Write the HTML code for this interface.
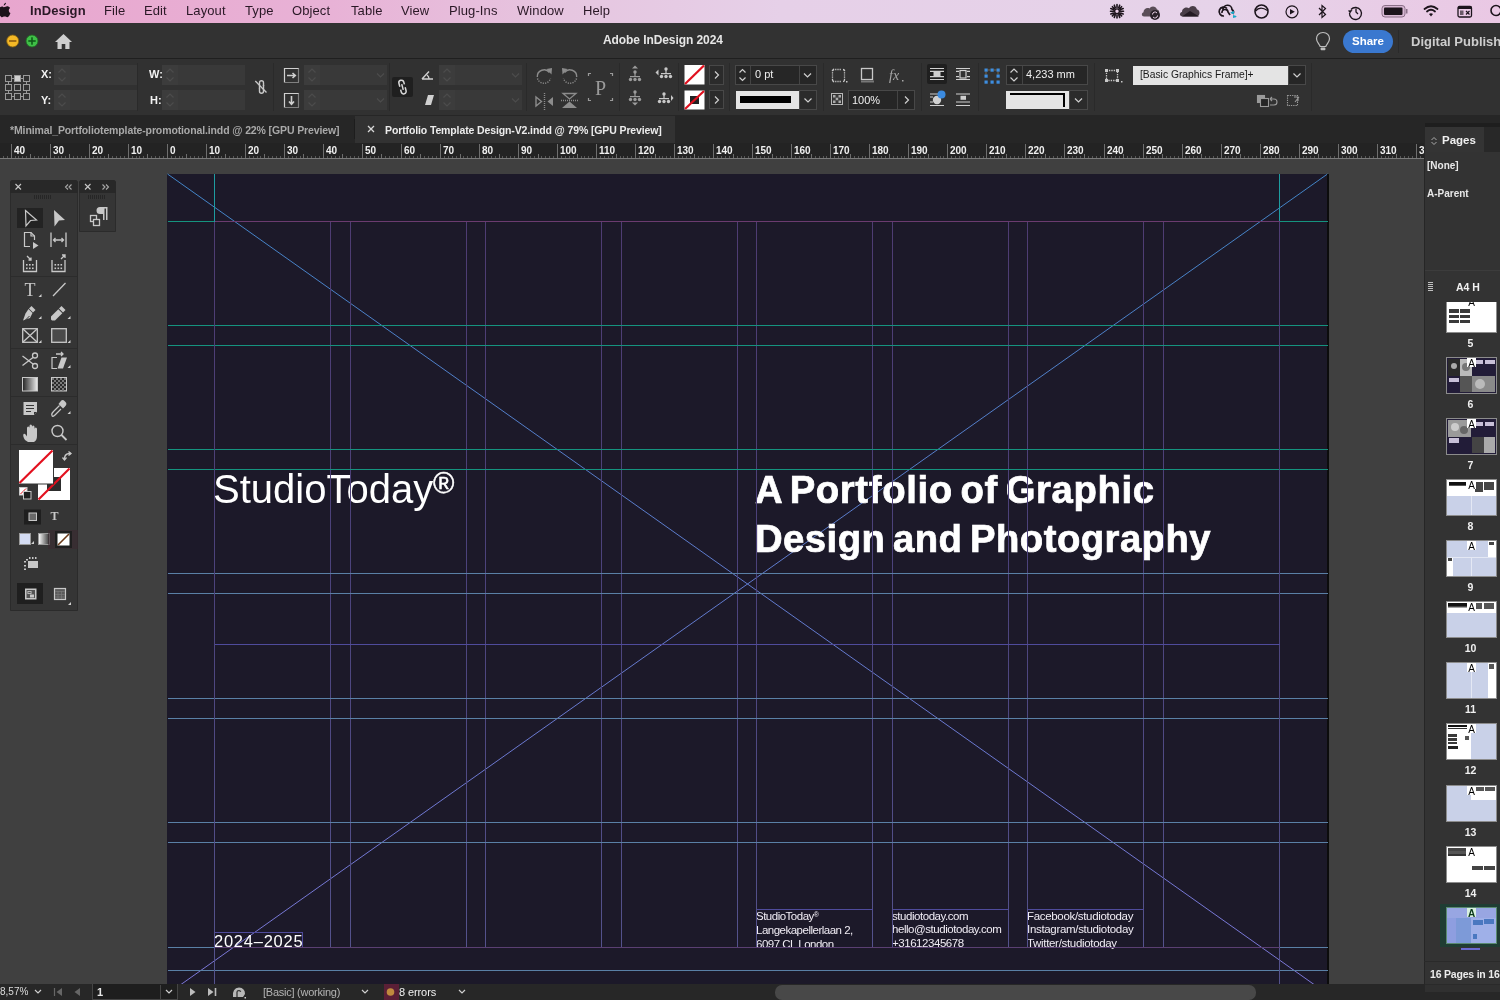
<!DOCTYPE html>
<html><head><meta charset="utf-8">
<style>
*{margin:0;padding:0;box-sizing:border-box}
html,body{width:1500px;height:1000px;overflow:hidden;background:#404040;font-family:"Liberation Sans",sans-serif}
.a{position:absolute}
#menubar{left:0;top:0;width:1500px;height:23px;background:linear-gradient(90deg,#e8a6ce 0%,#e8b2d6 22%,#e6c6e0 38%,#e6d0e8 52%,#e6d3e9 82%,#eac8e4 100%)}
#menubar span{position:absolute;top:3px;font-size:13px;color:#2a1826;letter-spacing:0.1px}
#appbar{left:0;top:23px;width:1500px;height:36px;background:#323232;border-bottom:1px solid #1f1f1f}
#ctrl{left:0;top:59px;width:1500px;height:56px;background:#313131}
#tabbar{left:0;top:115px;width:1500px;height:28px;background:#262626}
#ruler{left:0;top:143px;width:1424px;height:16px;background:#232323}
#paste{left:0;top:159px;width:1424px;height:825px;background:#404040}
#page{left:167px;top:174px;width:1161px;height:810px;background:#1c1929}
#status{left:0;top:984px;width:1500px;height:16px;background:#272727}
#pages{left:1424px;top:123px;width:76px;height:861px;background:#333}

.fld{position:absolute;background:#393939;height:20px}
.spn{position:absolute;background:#3c3c3c;height:20px;width:16px}
.lbl{position:absolute;font-size:11px;font-weight:bold;color:#f2f2f2}
.sep{position:absolute;width:1px;background:#2a2a2a;top:4px;height:48px}
.box{position:absolute;border:1px solid #484848;background:#2b2b2b}
.ui{position:absolute;white-space:nowrap;font-size:11px}
</style></head><body style="will-change:transform">
<div id="menubar" class="a">
<svg class="a" style="left:0;top:0" width="1500" height="23">
<path d="M5.2 6.2 C6.5 6.2 7.5 5.4 8.2 5.4 C9.3 5.4 10.4 6 11 7 C9.3 8 9.5 10.6 11.3 11.5 C10.8 13 9.8 15.2 8.5 15.2 C7.6 15.2 7.3 14.6 6.2 14.6 C5 14.6 4.6 15.2 3.8 15.2 C2.4 15.2 0.6 12.3 0.6 9.6 C0.6 7 2.3 5.6 3.9 5.6 C4.6 5.6 4.9 6.2 5.2 6.2 Z M7.3 2.2 C7.4 3.4 6.5 4.8 5.3 4.8 C5.2 3.6 6.1 2.4 7.3 2.2 Z" fill="#1c121a" transform="translate(-2.2 0.2) scale(1.12)"/>
<g fill="#1c141c" stroke="#1c141c">
<g stroke-width="1.6" stroke-linecap="round"><path d="M1117 4.5 V7.5 M1117 15 V18 M1110.5 11.3 H1113.5 M1120.5 11.3 H1123.5 M1112.4 6.7 L1114.5 8.8 M1119.5 13.8 L1121.6 15.9 M1112.4 15.9 L1114.5 13.8 M1119.5 8.8 L1121.6 6.7 M1114.3 5.2 L1115.3 7.8 M1118.7 14.8 L1119.7 17.4 M1110.8 8.6 L1113.4 9.6 M1120.6 13 L1123.2 14 M1110.8 14 L1113.4 13 M1120.6 9.6 L1123.2 8.6 M1114.3 17.4 L1115.3 14.8 M1118.7 7.8 L1119.7 5.2"/></g>
<circle cx="1117" cy="11.3" r="2.4" fill="#e9cde8" stroke-width="1.4"/>
</g>
<path d="M1144 16.5 C1141.5 16.5 1141 13 1143.5 12.3 C1143.5 9 1147 7 1149.5 8.5 C1151 5.5 1156 5.8 1157 9.5 C1159.5 9.8 1160 13 1158 14 L1156 16.5 Z" fill="#5a4e58"/>
<circle cx="1155" cy="15" r="5" fill="#2a222a"/><path d="M1152.5 14.5 A2.5 2.5 0 0 1 1157 13 M1157.5 15.5 A2.5 2.5 0 0 1 1153 17" fill="none" stroke="#e9d0e6" stroke-width="1"/>
<path d="M1182.5 16.5 C1179.5 16.5 1179 12.5 1182 12 C1182 8.5 1186 6.5 1189 8.2 C1191 5 1196 5.5 1197 9.5 C1200 9.8 1200.5 15 1197.5 16.5 Z" fill="#4a3e48"/>
<path d="M1182 16.5 L1190 11 L1199 16.5 Z" fill="#231a22"/>
<g fill="none" stroke="#1c141c" stroke-width="1.7"><path d="M1224 16 A4.5 4.5 0 1 1 1227 8.5 M1223 10 A4.5 4.5 0 0 1 1232 9.5 A3.5 3.5 0 0 1 1233 14"/><path d="M1222 13 A3 3 0 0 1 1228 12 L1230 15"/></g>
<path d="M1230 12.5 L1234 11 L1234 14 Z M1233 15 L1237 16.5 L1233 18 Z" fill="#1aa8c8"/><rect x="1231" y="12" width="3" height="1.5" fill="#1aa8c8"/><rect x="1233" y="15.8" width="3" height="1.5" fill="#1aa8c8"/>
<circle cx="1261.5" cy="11.5" r="6.5" fill="none" stroke="#1c141c" stroke-width="1.6"/><path d="M1255.5 11 Q1260 5.5 1267.5 10.5" fill="none" stroke="#1c141c" stroke-width="1.4"/>
<circle cx="1292" cy="11.8" r="6" fill="none" stroke="#1c141c" stroke-width="1.2"/><path d="M1290 9 L1294.8 11.8 L1290 14.6 Z" fill="#1c141c"/>
<path d="M1319 8 L1325.5 14.5 L1322 17.5 V5.5 L1325.5 8.5 L1319 15" fill="none" stroke="#1c141c" stroke-width="1.2"/>
<g fill="none" stroke="#1c141c" stroke-width="1.3"><path d="M1351 9.5 A6 6 0 1 1 1349.5 13"/><path d="M1356 8.5 V12 L1358 14"/></g><path d="M1348 10.5 L1352.5 10 L1350 13.5 Z" fill="#1c141c"/>
<rect x="1382" y="5.5" width="23" height="11.5" rx="3" fill="#d8b8d4" stroke="#8a7088" stroke-width="1"/><rect x="1384" y="7.5" width="18.5" height="7.5" rx="1" fill="#1c141c"/><rect x="1406" y="9" width="1.5" height="4.5" fill="#8a7088"/>
<g fill="none" stroke="#1c141c" stroke-width="1.8" stroke-linecap="round"><path d="M1424.5 9 Q1431 3.5 1437.5 9"/><path d="M1427 11.5 Q1431 8 1435 11.5"/></g><path d="M1429 14 Q1431 12.5 1433 14 L1431 16.5 Z" fill="#1c141c"/>
<rect x="1458" y="6.5" width="13.5" height="10.5" rx="1.5" fill="none" stroke="#1c141c" stroke-width="1.3"/><rect x="1458" y="6.5" width="13.5" height="2.5" fill="#1c141c"/><rect x="1460" y="10.5" width="3.5" height="4.5" fill="#6a5a68"/><path d="M1466 11 L1469.5 14.5 M1469.5 11 L1466 14.5" stroke="#1c141c" stroke-width="1.2"/>
<circle cx="1496" cy="10.5" r="5" fill="none" stroke="#1c141c" stroke-width="1.6"/>
</svg>
<span style="left:30px;font-weight:bold">InDesign</span>
<span style="left:104px">File</span>
<span style="left:144px">Edit</span>
<span style="left:186px">Layout</span>
<span style="left:245px">Type</span>
<span style="left:292px">Object</span>
<span style="left:351px">Table</span>
<span style="left:401px">View</span>
<span style="left:449px">Plug-Ins</span>
<span style="left:517px">Window</span>
<span style="left:583px">Help</span>
</div>
<div id="appbar" class="a">
<svg class="a" style="left:0;top:0" width="80" height="35">
<circle cx="12.7" cy="18" r="6" fill="#f4b826" stroke="#8a6410" stroke-width="0.8"/>
<rect x="9" y="17.2" width="7.4" height="1.6" fill="#8a5a10"/>
<circle cx="32" cy="18" r="6" fill="#3fbf47" stroke="#1f6a22" stroke-width="0.8"/>
<rect x="28.3" y="17.2" width="7.4" height="1.6" fill="#0f5a18"/><rect x="31.2" y="14.3" width="1.6" height="7.4" fill="#0f5a18"/>
<path d="M55 19 L63.5 11 L72 19 L69.5 19 L69.5 26 L65.3 26 L65.3 21 L61.7 21 L61.7 26 L57.5 26 L57.5 19 Z" fill="#cfcfcf"/>
</svg>
<div class="a" style="left:603px;top:10px;font-size:12px;font-weight:bold;color:#e6e6e6;letter-spacing:-0.08px;white-space:nowrap">Adobe InDesign 2024</div>
<svg class="a" style="left:1310px;top:6px" width="26" height="26">
<path d="M13 3.5 C8.8 3.5 6.5 6.6 6.5 9.8 C6.5 13 9.2 14.8 10.2 17.5 L15.8 17.5 C16.8 14.8 19.5 13 19.5 9.8 C19.5 6.6 17.2 3.5 13 3.5 Z" fill="none" stroke="#bdbdbd" stroke-width="1.2"/>
<rect x="10.6" y="18.6" width="4.8" height="2.6" rx="0.8" fill="#bdbdbd"/>
</svg>
<div class="a" style="left:1343px;top:7px;width:50px;height:23px;border-radius:12px;background:#3a78cf"></div>
<div class="a" style="left:1352px;top:12px;font-size:11.5px;font-weight:bold;color:#fff;white-space:nowrap">Share</div>
<div class="a" style="left:1398px;top:7px;width:1px;height:23px;background:#2a2a2a"></div>
<div class="a" style="left:1411px;top:11px;font-size:13px;font-weight:bold;color:#cdcdcd;white-space:nowrap">Digital Publishing</div>
</div>
<div id="ctrl" class="a">
<svg class="a" style="left:0;top:0" width="40" height="56">
<g fill="none" stroke="#9a9a9a" stroke-width="1">
<rect x="5.5" y="16.5" width="6" height="6"/><rect x="14.5" y="16.5" width="6" height="6" fill="#cfcfcf"/><rect x="23.5" y="16.5" width="6" height="6"/>
<rect x="5.5" y="25.5" width="6" height="6"/><rect x="14.5" y="25.5" width="6" height="6"/><rect x="23.5" y="25.5" width="6" height="6"/>
<rect x="5.5" y="34.5" width="6" height="6"/><rect x="14.5" y="34.5" width="6" height="6"/><rect x="23.5" y="34.5" width="6" height="6"/>
<path d="M11.5 19.5h3M20.5 19.5h3M11.5 37.5h3M20.5 37.5h3M8.5 22.5v3M8.5 31.5v3M26.5 22.5v3M26.5 31.5v3"/>
</g></svg>
<div class="lbl" style="left:41px;top:9px">X:</div>
<div class="lbl" style="left:41px;top:35px">Y:</div>
<div class="fld" style="left:54px;top:6px;width:83px"></div><div class="spn" style="left:54px;top:6px"><svg width="16" height="20" style="position:absolute;left:0;top:0"><path d="M4.5 7.5 L8 4 L11.5 7.5 M4.5 12.5 L8 16 L11.5 12.5" fill="none" stroke="#4c4c4c" stroke-width="1.2"/></svg></div>
<div class="fld" style="left:54px;top:31px;width:83px"></div><div class="spn" style="left:54px;top:31px"><svg width="16" height="20" style="position:absolute;left:0;top:0"><path d="M4.5 7.5 L8 4 L11.5 7.5 M4.5 12.5 L8 16 L11.5 12.5" fill="none" stroke="#4c4c4c" stroke-width="1.2"/></svg></div>
<div class="sep" style="left:137px"></div>
<div class="lbl" style="left:149px;top:9px">W:</div>
<div class="lbl" style="left:150px;top:35px">H:</div>
<div class="fld" style="left:162px;top:6px;width:83px"></div><div class="spn" style="left:162px;top:6px"><svg width="16" height="20" style="position:absolute;left:0;top:0"><path d="M4.5 7.5 L8 4 L11.5 7.5 M4.5 12.5 L8 16 L11.5 12.5" fill="none" stroke="#4c4c4c" stroke-width="1.2"/></svg></div>
<div class="fld" style="left:162px;top:31px;width:83px"></div><div class="spn" style="left:162px;top:31px"><svg width="16" height="20" style="position:absolute;left:0;top:0"><path d="M4.5 7.5 L8 4 L11.5 7.5 M4.5 12.5 L8 16 L11.5 12.5" fill="none" stroke="#4c4c4c" stroke-width="1.2"/></svg></div>
<svg class="a" style="left:250px;top:16px" width="22" height="22"><g fill="none" stroke="#c8c8c8" stroke-width="1.4">
<path d="M9.5 13.5 V7.8 a2 2 0 0 1 4 0 V11"/><path d="M13.5 10 V16.2 a2 2 0 0 1 -4 0 V13"/></g>
<path d="M5.3 6 L16.5 17.5" stroke="#c8c8c8" stroke-width="1.3"/></svg>
<div class="sep" style="left:273px"></div>
<svg class="a" style="left:283px;top:8px" width="18" height="44"><g fill="none" stroke="#d0d0d0" stroke-width="1.2">
<path d="M1.5 15.5 V1.5 H15.5"/><path d="M15.5 1.5 V15.5 H1.5" stroke-dasharray="1 1"/>
<path d="M4 8.5 H12 M9.5 6 L12.3 8.5 L9.5 11" stroke-width="1.6"/>
<path d="M1.5 40.5 V26.5 H15.5"/><path d="M15.5 26.5 V40.5 H1.5" stroke-dasharray="1 1"/>
<path d="M8.5 29 V37 M6 34.5 L8.5 37.3 L11 34.5" stroke-width="1.6"/></g></svg>
<div class="fld" style="left:304px;top:6px;width:83px"></div><div class="spn" style="left:304px;top:6px"><svg width="16" height="20" style="position:absolute;left:0;top:0"><path d="M4.5 7.5 L8 4 L11.5 7.5 M4.5 12.5 L8 16 L11.5 12.5" fill="none" stroke="#4c4c4c" stroke-width="1.2"/></svg></div>
<div class="fld" style="left:304px;top:31px;width:83px"></div><div class="spn" style="left:304px;top:31px"><svg width="16" height="20" style="position:absolute;left:0;top:0"><path d="M4.5 7.5 L8 4 L11.5 7.5 M4.5 12.5 L8 16 L11.5 12.5" fill="none" stroke="#4c4c4c" stroke-width="1.2"/></svg></div>
<div class="sep" style="left:389px"></div>
<div class="a" style="left:392px;top:18px;width:21px;height:20px;background:#1f1f1f;border-radius:2px"></div>
<svg class="a" style="left:392px;top:18px" width="21" height="20"><g fill="none" stroke="#d8d8d8" stroke-width="1.5" transform="rotate(-15 10.5 10)">
<path d="M8 9 V5.5 a2.5 2.5 0 0 1 5 0 V8"/><path d="M13 11 V14.5 a2.5 2.5 0 0 1 -5 0 V12"/><path d="M10.5 7 V13"/></g></svg>
<svg class="a" style="left:420px;top:10px" width="16" height="40"><g fill="none" stroke="#d0d0d0" stroke-width="1.4">
<path d="M2 10 H13 M2 10 L9 2.5"/><path d="M7 6 Q9 7.5 9 10"/></g>
<path d="M5 36 L8 26 H14 L11 36 Z" fill="#d0d0d0"/></svg>
<div class="fld" style="left:439px;top:6px;width:83px"></div><div class="spn" style="left:439px;top:6px"><svg width="16" height="20" style="position:absolute;left:0;top:0"><path d="M4.5 7.5 L8 4 L11.5 7.5 M4.5 12.5 L8 16 L11.5 12.5" fill="none" stroke="#4c4c4c" stroke-width="1.2"/></svg></div>
<div class="fld" style="left:439px;top:31px;width:83px"></div><div class="spn" style="left:439px;top:31px"><svg width="16" height="20" style="position:absolute;left:0;top:0"><path d="M4.5 7.5 L8 4 L11.5 7.5 M4.5 12.5 L8 16 L11.5 12.5" fill="none" stroke="#4c4c4c" stroke-width="1.2"/></svg></div>
<div class="sep" style="left:526px"></div>
<svg class="a" style="left:530px;top:4px" width="90" height="50">
<g fill="none" stroke="#8c8c8c" stroke-width="1.4">
<path d="M7.5 15.5 A6.8 6.8 0 0 0 20.5 15.5" stroke-dasharray="1.2 1.2"/><path d="M7.3 14 A6.8 6.8 0 0 1 19.5 9.5"/>
<path d="M46.5 15.5 A6.8 6.8 0 0 1 33.5 15.5" stroke-dasharray="1.2 1.2"/><path d="M46.7 14 A6.8 6.8 0 0 0 34.5 9.5"/>
<path d="M6 34 L11.5 38.5 L6 43 Z"/><path d="M14.5 30 V48" stroke-dasharray="1 1"/></g>
<g fill="#8c8c8c"><path d="M16.5 6 L22 5 L21.5 11.5 Z"/><path d="M37.5 6 L32 5 L32.5 11.5 Z"/>
<path d="M23 34 L17.5 38.5 L23 43 Z"/>
<path d="M32 45 L39.5 38.5 L47 45 Z"/></g>
<g fill="none" stroke="#8c8c8c" stroke-width="1.3"><path d="M33 30.5 H46 L39.5 36 Z"/><path d="M31 37.5 H48" stroke-dasharray="1 1"/></g>
<g fill="none" stroke="#9a9a9a" stroke-width="1.2"><path d="M58.5 13 V10.5 H61 M80 10.5 H82.5 V13 M58.5 35 V37.5 H61 M80 37.5 H82.5 V35"/></g>
<text x="70.5" y="32" font-family="Liberation Serif" font-size="20" fill="#9a9a9a" text-anchor="middle">P</text>
</svg>
<div class="sep" style="left:619px"></div>
<svg class="a" style="left:624px;top:4px" width="54" height="50"><g fill="#9c9c9c" transform="translate(3 0)">
<path d="M8 2.5 L11 5.5 H5 Z"/><circle cx="8" cy="9" r="1.7"/><rect x="7.4" y="9" width="1.2" height="5"/><rect x="3" y="13" width="10" height="1.2"/><circle cx="3.5" cy="16.5" r="1.7"/><circle cx="8" cy="16.5" r="1.7"/><circle cx="12.5" cy="16.5" r="1.7"/>
<g transform="translate(0 25)"><circle cx="8" cy="4" r="1.7"/><rect x="7.4" y="4" width="1.2" height="5"/><rect x="3" y="8" width="10" height="1.2"/><circle cx="3.5" cy="11.5" r="1.7"/><circle cx="8" cy="11.5" r="1.7"/><circle cx="12.5" cy="11.5" r="1.7"/><path d="M5 14.5 H11 L8 17.5 Z"/></g>
</g><g fill="#c8c8c8">
<g transform="translate(33 3)"><circle cx="9" cy="3" r="1.7"/><rect x="8.4" y="3" width="1.2" height="5"/><rect x="4" y="7" width="10" height="1.2"/><circle cx="4.5" cy="10.5" r="1.7"/><circle cx="9" cy="10.5" r="1.7"/><circle cx="13.5" cy="10.5" r="1.7"/><path d="M-1.5 6.5 L1.5 3.5 V9.5 Z"/></g>
<g transform="translate(31 28)"><circle cx="9" cy="3" r="1.7"/><rect x="8.4" y="3" width="1.2" height="5"/><rect x="4" y="7" width="10" height="1.2"/><circle cx="4.5" cy="10.5" r="1.7"/><circle cx="9" cy="10.5" r="1.7"/><circle cx="13.5" cy="10.5" r="1.7"/><path d="M17 7 L14.5 4 V10 Z" transform="translate(1.5 0)"/></g>
</g></svg>
<div class="sep" style="left:678px"></div>
<svg class="a" style="left:684px;top:6px" width="22" height="45">
<rect x="0.5" y="0" width="20" height="19.5" fill="#fff"/><path d="M1 19 L20 0.5" stroke="#e0101e" stroke-width="2.2"/>
<rect x="0.5" y="25.5" width="20" height="19" fill="#fff"/><rect x="6" y="31" width="9" height="8" fill="#222"/><path d="M1 44 L20 26" stroke="#e0101e" stroke-width="2.2"/>
</svg>
<div class="box" style="left:709px;top:6px;width:15px;height:20px"></div>
<div class="box" style="left:709px;top:31px;width:15px;height:19px"></div>
<svg class="a" style="left:709px;top:6px" width="15" height="45"><g fill="none" stroke="#cfcfcf" stroke-width="1.2"><path d="M6 6.5 L9.5 10 L6 13.5"/><path d="M6 31.5 L9.5 35 L6 38.5"/></g></svg>
<div class="sep" style="left:729px"></div>
<div class="box" style="left:735px;top:6px;width:82px;height:20px;background:#262626"></div>
<div class="a" style="left:750px;top:7px;width:1px;height:18px;background:#444"></div>
<div class="a" style="left:799px;top:7px;width:1px;height:18px;background:#444"></div>
<svg class="a" style="left:735px;top:6px" width="82" height="20"><g fill="none" stroke="#d0d0d0" stroke-width="1.2"><path d="M4.5 7.5 L7.5 4.5 L10.5 7.5 M4.5 12.5 L7.5 15.5 L10.5 12.5"/><path d="M69 8.5 L72.5 12 L76 8.5"/></g></svg>
<div class="ui" style="left:755px;top:9px;color:#efefef">0 pt</div>
<div class="a" style="left:736px;top:32px;width:63px;height:18px;background:#e4e4e4"></div>
<div class="a" style="left:740px;top:37px;width:51px;height:7px;background:#000"></div>
<div class="box" style="left:799px;top:31px;width:18px;height:20px;background:#2b2b2b"></div>
<svg class="a" style="left:799px;top:31px" width="18" height="20"><path d="M5.5 8.5 L9 12 L12.5 8.5" fill="none" stroke="#d0d0d0" stroke-width="1.2"/></svg>
<div class="sep" style="left:823px"></div>
<svg class="a" style="left:828px;top:6px" width="80" height="46"><g fill="none" stroke="#c8c8c8" stroke-width="1.3">
<path d="M5 4.5 H13 M5 16.5 H13 M4.5 5 V16 M16.5 5 V16" stroke-dasharray="1.2 1"/>
<path d="M6 4.5 Q4.5 4.5 4.5 6 M15 4.5 Q16.5 4.5 16.5 6 M4.5 15 Q4.5 16.5 6 16.5 M16.5 15 Q16.5 16.5 15 16.5"/>
<rect x="33.5" y="3.5" width="11" height="11"/>
</g><rect x="18" y="16" width="1.5" height="1.5" fill="#c8c8c8"/>
<rect x="33" y="15.5" width="13" height="2" fill="#777"/>
<text x="61" y="15" font-family="Liberation Serif" font-style="italic" font-size="14" fill="#a8a8a8">fx</text><rect x="74" y="15" width="1.5" height="1.5" fill="#a8a8a8"/>
<g transform="translate(3 28)"><rect x="0.5" y="0.5" width="11" height="11" fill="none" stroke="#b8b8b8"/><rect x="2" y="2" width="8" height="8" fill="#3a3a3a"/><rect x="2" y="2" width="2.5" height="2.5" fill="#aaa"/><rect x="7.5" y="2" width="2.5" height="2.5" fill="#aaa"/><rect x="4.7" y="4.7" width="2.5" height="2.5" fill="#aaa"/><rect x="2" y="7.5" width="2.5" height="2.5" fill="#aaa"/><rect x="7.5" y="7.5" width="2.5" height="2.5" fill="#aaa"/></g>
</svg>
<div class="box" style="left:848px;top:31px;width:67px;height:20px;background:#262626"></div>
<div class="a" style="left:897px;top:32px;width:1px;height:18px;background:#444"></div>
<div class="ui" style="left:852px;top:35px;color:#efefef">100%</div>
<svg class="a" style="left:898px;top:31px" width="17" height="20"><path d="M7 6.5 L10.5 10 L7 13.5" fill="none" stroke="#d0d0d0" stroke-width="1.2"/></svg>
<div class="sep" style="left:921px"></div>
<div class="a" style="left:927px;top:5px;width:20px;height:20px;background:#1f1f1f;border-radius:2px"></div>
<svg class="a" style="left:927px;top:5px" width="50" height="48"><g fill="none" stroke="#d0d0d0" stroke-width="1.2">
<path d="M3 4.5 H17 M3 15.5 H17 M3 7.3 H17 M3 12.7 H17"/><rect x="6.5" y="8" width="7" height="4" fill="#d0d0d0" stroke="none"/>
<path d="M29 4.5 H43 M29 15.5 H43 M29 7.3 H32 M40 7.3 H43 M29 12.7 H32 M40 12.7 H43"/><rect x="33" y="6.5" width="6" height="7.5"/>
<path d="M3 30 H17 M3 41.5 H17 M3 33 H6 M3 38 H6"/>
<path d="M29 30 H43 M29 41.5 H43 M29 38 H43"/><rect x="33.5" y="31.8" width="5.5" height="4" fill="#d0d0d0" stroke="none"/>
</g><circle cx="10" cy="36" r="4.2" fill="#d0d0d0"/><circle cx="14.5" cy="30.5" r="4" fill="#3b8be0"/></svg>
<div class="sep" style="left:978px"></div>
<svg class="a" style="left:984px;top:9px" width="18" height="16"><g fill="#3e8ee0"><rect x="0.5" y="0.5" width="3.2" height="3.2"/><rect x="6.5" y="0.5" width="3.2" height="3.2"/><rect x="12.5" y="0.5" width="3.2" height="3.2"/><rect x="0.5" y="6.5" width="3.2" height="3.2"/><rect x="12.5" y="6.5" width="3.2" height="3.2"/><rect x="0.5" y="12.5" width="3.2" height="3.2"/><rect x="6.5" y="12.5" width="3.2" height="3.2"/><rect x="12.5" y="12.5" width="3.2" height="3.2"/></g><path d="M3.7 2 H6.5 M9.7 2 H12.5 M2 3.7 V6.5 M14 3.7 V6.5" stroke="#8a7a5a" stroke-width="0.8"/></svg>
<div class="box" style="left:1006px;top:6px;width:82px;height:20px;background:#262626"></div>
<div class="a" style="left:1022px;top:7px;width:1px;height:18px;background:#444"></div>
<svg class="a" style="left:1006px;top:6px" width="16" height="20"><path d="M4.5 7.5 L8 4 L11.5 7.5 M4.5 12.5 L8 16 L11.5 12.5" fill="none" stroke="#d0d0d0" stroke-width="1.2"/></svg>
<div class="ui" style="left:1026px;top:9px;color:#efefef">4,233 mm</div>
<div class="a" style="left:1006px;top:32px;width:63px;height:18px;background:#e4e4e4"></div>
<div class="a" style="left:1010px;top:34px;width:55px;height:2px;background:#000"></div><div class="a" style="left:1063px;top:34px;width:2px;height:14px;background:#000"></div>
<div class="box" style="left:1069px;top:31px;width:19px;height:20px;background:#2b2b2b"></div>
<svg class="a" style="left:1069px;top:31px" width="19" height="20"><path d="M6 8.5 L9.5 12 L13 8.5" fill="none" stroke="#d0d0d0" stroke-width="1.2"/></svg>
<div class="sep" style="left:1094px"></div>
<svg class="a" style="left:1104px;top:9px" width="20" height="16"><g fill="none" stroke="#c8c8c8" stroke-width="1.3"><rect x="2.5" y="2.5" width="11" height="10" stroke-dasharray="1.4 1"/></g><g fill="#c8c8c8"><rect x="1" y="1" width="3" height="3"/><rect x="12" y="1" width="3" height="3"/><rect x="1" y="11" width="3" height="3"/><rect x="12" y="11" width="3" height="3"/><rect x="17" y="13" width="1.5" height="1.5"/></g></svg>
<div class="a" style="left:1133px;top:7px;width:156px;height:19px;background:#e4e4e4"></div>
<div class="ui" style="left:1140px;top:10px;color:#1a1a1a;font-size:10.3px">[Basic Graphics Frame]+</div>
<div class="box" style="left:1288px;top:6px;width:18px;height:20px;background:#262626"></div>
<svg class="a" style="left:1288px;top:6px" width="18" height="20"><path d="M5.5 8.5 L9 12 L12.5 8.5" fill="none" stroke="#d0d0d0" stroke-width="1.2"/></svg>
<svg class="a" style="left:1255px;top:34px" width="50" height="16"><g fill="none" stroke="#9a9a9a" stroke-width="1.1">
<rect x="2.5" y="2.5" width="7" height="7" fill="#9a9a9a"/><rect x="5.5" y="5.5" width="8" height="8" fill="#262626"/><path d="M15 6 H19 a3 3 0 0 1 0 6 H15 M15 6 L17 4 M15 6 L17 8"/>
<rect x="32.5" y="2.5" width="10" height="10" stroke-dasharray="1.3 1"/><path d="M44 4 L40 9 M43 8 V4 H39"/></g></svg>
<svg class="a" style="left:374px;top:6px" width="13" height="20"><path d="M3 8.5 L6.5 12 L10 8.5" fill="none" stroke="#4c4c4c" stroke-width="1.2"/></svg>
<svg class="a" style="left:374px;top:31px" width="13" height="20"><path d="M3 8.5 L6.5 12 L10 8.5" fill="none" stroke="#4c4c4c" stroke-width="1.2"/></svg>
<svg class="a" style="left:509px;top:6px" width="13" height="20"><path d="M3 8.5 L6.5 12 L10 8.5" fill="none" stroke="#4c4c4c" stroke-width="1.2"/></svg>
<svg class="a" style="left:509px;top:31px" width="13" height="20"><path d="M3 8.5 L6.5 12 L10 8.5" fill="none" stroke="#4c4c4c" stroke-width="1.2"/></svg>
<div class="sep" style="left:1311px"></div>
</div>
<div id="tabbar" class="a">
<div class="ui" style="left:10px;top:9px;font-size:10.5px;font-weight:bold;color:#a9a9a9;letter-spacing:-0.12px">*Minimal_Portfoliotemplate-promotional.indd @ 22% [GPU Preview]</div>
<div class="a" style="left:354px;top:4px;width:1px;height:20px;background:#1d1d1d"></div>
<div class="a" style="left:355px;top:1px;width:320px;height:27px;background:#323232"></div>
<svg class="a" style="left:366px;top:9px" width="10" height="10"><path d="M2 2 L8 8 M8 2 L2 8" stroke="#d8d8d8" stroke-width="1.3"/></svg>
<div class="ui" style="left:385px;top:9px;font-size:10.5px;font-weight:bold;color:#ececec;letter-spacing:-0.12px">Portfolio Template Design-V2.indd @ 79% [GPU Preview]</div>
</div>
<div id="ruler" class="a">
<svg class="a" style="left:0;top:0" width="1424" height="16" shape-rendering="crispEdges">
<rect x="0" y="15" width="1424" height="1" fill="#7a7a7a"/>
<rect x="3" y="13" width="1" height="2" fill="#585858"/>
<rect x="7" y="13" width="1" height="2" fill="#585858"/>
<rect x="11" y="1" width="1" height="14" fill="#6e6e6e"/>
<rect x="15" y="13" width="1" height="2" fill="#585858"/>
<rect x="18" y="13" width="1" height="2" fill="#585858"/>
<rect x="22" y="13" width="1" height="2" fill="#585858"/>
<rect x="26" y="13" width="1" height="2" fill="#585858"/>
<rect x="30" y="11" width="1" height="4" fill="#6e6e6e"/>
<rect x="34" y="13" width="1" height="2" fill="#585858"/>
<rect x="38" y="13" width="1" height="2" fill="#585858"/>
<rect x="42" y="13" width="1" height="2" fill="#585858"/>
<rect x="46" y="13" width="1" height="2" fill="#585858"/>
<rect x="50" y="1" width="1" height="14" fill="#6e6e6e"/>
<rect x="54" y="13" width="1" height="2" fill="#585858"/>
<rect x="58" y="13" width="1" height="2" fill="#585858"/>
<rect x="61" y="13" width="1" height="2" fill="#585858"/>
<rect x="65" y="13" width="1" height="2" fill="#585858"/>
<rect x="69" y="11" width="1" height="4" fill="#6e6e6e"/>
<rect x="73" y="13" width="1" height="2" fill="#585858"/>
<rect x="77" y="13" width="1" height="2" fill="#585858"/>
<rect x="81" y="13" width="1" height="2" fill="#585858"/>
<rect x="85" y="13" width="1" height="2" fill="#585858"/>
<rect x="89" y="1" width="1" height="14" fill="#6e6e6e"/>
<rect x="93" y="13" width="1" height="2" fill="#585858"/>
<rect x="97" y="13" width="1" height="2" fill="#585858"/>
<rect x="100" y="13" width="1" height="2" fill="#585858"/>
<rect x="104" y="13" width="1" height="2" fill="#585858"/>
<rect x="108" y="11" width="1" height="4" fill="#6e6e6e"/>
<rect x="112" y="13" width="1" height="2" fill="#585858"/>
<rect x="116" y="13" width="1" height="2" fill="#585858"/>
<rect x="120" y="13" width="1" height="2" fill="#585858"/>
<rect x="124" y="13" width="1" height="2" fill="#585858"/>
<rect x="128" y="1" width="1" height="14" fill="#6e6e6e"/>
<rect x="132" y="13" width="1" height="2" fill="#585858"/>
<rect x="136" y="13" width="1" height="2" fill="#585858"/>
<rect x="139" y="13" width="1" height="2" fill="#585858"/>
<rect x="143" y="13" width="1" height="2" fill="#585858"/>
<rect x="147" y="11" width="1" height="4" fill="#6e6e6e"/>
<rect x="151" y="13" width="1" height="2" fill="#585858"/>
<rect x="155" y="13" width="1" height="2" fill="#585858"/>
<rect x="159" y="13" width="1" height="2" fill="#585858"/>
<rect x="163" y="13" width="1" height="2" fill="#585858"/>
<rect x="167" y="1" width="1" height="14" fill="#6e6e6e"/>
<rect x="171" y="13" width="1" height="2" fill="#585858"/>
<rect x="175" y="13" width="1" height="2" fill="#585858"/>
<rect x="179" y="13" width="1" height="2" fill="#585858"/>
<rect x="182" y="13" width="1" height="2" fill="#585858"/>
<rect x="186" y="11" width="1" height="4" fill="#6e6e6e"/>
<rect x="190" y="13" width="1" height="2" fill="#585858"/>
<rect x="194" y="13" width="1" height="2" fill="#585858"/>
<rect x="198" y="13" width="1" height="2" fill="#585858"/>
<rect x="202" y="13" width="1" height="2" fill="#585858"/>
<rect x="206" y="1" width="1" height="14" fill="#6e6e6e"/>
<rect x="210" y="13" width="1" height="2" fill="#585858"/>
<rect x="214" y="13" width="1" height="2" fill="#585858"/>
<rect x="218" y="13" width="1" height="2" fill="#585858"/>
<rect x="221" y="13" width="1" height="2" fill="#585858"/>
<rect x="225" y="11" width="1" height="4" fill="#6e6e6e"/>
<rect x="229" y="13" width="1" height="2" fill="#585858"/>
<rect x="233" y="13" width="1" height="2" fill="#585858"/>
<rect x="237" y="13" width="1" height="2" fill="#585858"/>
<rect x="241" y="13" width="1" height="2" fill="#585858"/>
<rect x="245" y="1" width="1" height="14" fill="#6e6e6e"/>
<rect x="249" y="13" width="1" height="2" fill="#585858"/>
<rect x="253" y="13" width="1" height="2" fill="#585858"/>
<rect x="257" y="13" width="1" height="2" fill="#585858"/>
<rect x="260" y="13" width="1" height="2" fill="#585858"/>
<rect x="264" y="11" width="1" height="4" fill="#6e6e6e"/>
<rect x="268" y="13" width="1" height="2" fill="#585858"/>
<rect x="272" y="13" width="1" height="2" fill="#585858"/>
<rect x="276" y="13" width="1" height="2" fill="#585858"/>
<rect x="280" y="13" width="1" height="2" fill="#585858"/>
<rect x="284" y="1" width="1" height="14" fill="#6e6e6e"/>
<rect x="288" y="13" width="1" height="2" fill="#585858"/>
<rect x="292" y="13" width="1" height="2" fill="#585858"/>
<rect x="296" y="13" width="1" height="2" fill="#585858"/>
<rect x="300" y="13" width="1" height="2" fill="#585858"/>
<rect x="303" y="11" width="1" height="4" fill="#6e6e6e"/>
<rect x="307" y="13" width="1" height="2" fill="#585858"/>
<rect x="311" y="13" width="1" height="2" fill="#585858"/>
<rect x="315" y="13" width="1" height="2" fill="#585858"/>
<rect x="319" y="13" width="1" height="2" fill="#585858"/>
<rect x="323" y="1" width="1" height="14" fill="#6e6e6e"/>
<rect x="327" y="13" width="1" height="2" fill="#585858"/>
<rect x="331" y="13" width="1" height="2" fill="#585858"/>
<rect x="335" y="13" width="1" height="2" fill="#585858"/>
<rect x="339" y="13" width="1" height="2" fill="#585858"/>
<rect x="342" y="11" width="1" height="4" fill="#6e6e6e"/>
<rect x="346" y="13" width="1" height="2" fill="#585858"/>
<rect x="350" y="13" width="1" height="2" fill="#585858"/>
<rect x="354" y="13" width="1" height="2" fill="#585858"/>
<rect x="358" y="13" width="1" height="2" fill="#585858"/>
<rect x="362" y="1" width="1" height="14" fill="#6e6e6e"/>
<rect x="366" y="13" width="1" height="2" fill="#585858"/>
<rect x="370" y="13" width="1" height="2" fill="#585858"/>
<rect x="374" y="13" width="1" height="2" fill="#585858"/>
<rect x="378" y="13" width="1" height="2" fill="#585858"/>
<rect x="381" y="11" width="1" height="4" fill="#6e6e6e"/>
<rect x="385" y="13" width="1" height="2" fill="#585858"/>
<rect x="389" y="13" width="1" height="2" fill="#585858"/>
<rect x="393" y="13" width="1" height="2" fill="#585858"/>
<rect x="397" y="13" width="1" height="2" fill="#585858"/>
<rect x="401" y="1" width="1" height="14" fill="#6e6e6e"/>
<rect x="405" y="13" width="1" height="2" fill="#585858"/>
<rect x="409" y="13" width="1" height="2" fill="#585858"/>
<rect x="413" y="13" width="1" height="2" fill="#585858"/>
<rect x="417" y="13" width="1" height="2" fill="#585858"/>
<rect x="420" y="11" width="1" height="4" fill="#6e6e6e"/>
<rect x="424" y="13" width="1" height="2" fill="#585858"/>
<rect x="428" y="13" width="1" height="2" fill="#585858"/>
<rect x="432" y="13" width="1" height="2" fill="#585858"/>
<rect x="436" y="13" width="1" height="2" fill="#585858"/>
<rect x="440" y="1" width="1" height="14" fill="#6e6e6e"/>
<rect x="444" y="13" width="1" height="2" fill="#585858"/>
<rect x="448" y="13" width="1" height="2" fill="#585858"/>
<rect x="452" y="13" width="1" height="2" fill="#585858"/>
<rect x="456" y="13" width="1" height="2" fill="#585858"/>
<rect x="460" y="11" width="1" height="4" fill="#6e6e6e"/>
<rect x="463" y="13" width="1" height="2" fill="#585858"/>
<rect x="467" y="13" width="1" height="2" fill="#585858"/>
<rect x="471" y="13" width="1" height="2" fill="#585858"/>
<rect x="475" y="13" width="1" height="2" fill="#585858"/>
<rect x="479" y="1" width="1" height="14" fill="#6e6e6e"/>
<rect x="483" y="13" width="1" height="2" fill="#585858"/>
<rect x="487" y="13" width="1" height="2" fill="#585858"/>
<rect x="491" y="13" width="1" height="2" fill="#585858"/>
<rect x="495" y="13" width="1" height="2" fill="#585858"/>
<rect x="499" y="11" width="1" height="4" fill="#6e6e6e"/>
<rect x="502" y="13" width="1" height="2" fill="#585858"/>
<rect x="506" y="13" width="1" height="2" fill="#585858"/>
<rect x="510" y="13" width="1" height="2" fill="#585858"/>
<rect x="514" y="13" width="1" height="2" fill="#585858"/>
<rect x="518" y="1" width="1" height="14" fill="#6e6e6e"/>
<rect x="522" y="13" width="1" height="2" fill="#585858"/>
<rect x="526" y="13" width="1" height="2" fill="#585858"/>
<rect x="530" y="13" width="1" height="2" fill="#585858"/>
<rect x="534" y="13" width="1" height="2" fill="#585858"/>
<rect x="538" y="11" width="1" height="4" fill="#6e6e6e"/>
<rect x="541" y="13" width="1" height="2" fill="#585858"/>
<rect x="545" y="13" width="1" height="2" fill="#585858"/>
<rect x="549" y="13" width="1" height="2" fill="#585858"/>
<rect x="553" y="13" width="1" height="2" fill="#585858"/>
<rect x="557" y="1" width="1" height="14" fill="#6e6e6e"/>
<rect x="561" y="13" width="1" height="2" fill="#585858"/>
<rect x="565" y="13" width="1" height="2" fill="#585858"/>
<rect x="569" y="13" width="1" height="2" fill="#585858"/>
<rect x="573" y="13" width="1" height="2" fill="#585858"/>
<rect x="577" y="11" width="1" height="4" fill="#6e6e6e"/>
<rect x="581" y="13" width="1" height="2" fill="#585858"/>
<rect x="584" y="13" width="1" height="2" fill="#585858"/>
<rect x="588" y="13" width="1" height="2" fill="#585858"/>
<rect x="592" y="13" width="1" height="2" fill="#585858"/>
<rect x="596" y="1" width="1" height="14" fill="#6e6e6e"/>
<rect x="600" y="13" width="1" height="2" fill="#585858"/>
<rect x="604" y="13" width="1" height="2" fill="#585858"/>
<rect x="608" y="13" width="1" height="2" fill="#585858"/>
<rect x="612" y="13" width="1" height="2" fill="#585858"/>
<rect x="616" y="11" width="1" height="4" fill="#6e6e6e"/>
<rect x="620" y="13" width="1" height="2" fill="#585858"/>
<rect x="623" y="13" width="1" height="2" fill="#585858"/>
<rect x="627" y="13" width="1" height="2" fill="#585858"/>
<rect x="631" y="13" width="1" height="2" fill="#585858"/>
<rect x="635" y="1" width="1" height="14" fill="#6e6e6e"/>
<rect x="639" y="13" width="1" height="2" fill="#585858"/>
<rect x="643" y="13" width="1" height="2" fill="#585858"/>
<rect x="647" y="13" width="1" height="2" fill="#585858"/>
<rect x="651" y="13" width="1" height="2" fill="#585858"/>
<rect x="655" y="11" width="1" height="4" fill="#6e6e6e"/>
<rect x="659" y="13" width="1" height="2" fill="#585858"/>
<rect x="662" y="13" width="1" height="2" fill="#585858"/>
<rect x="666" y="13" width="1" height="2" fill="#585858"/>
<rect x="670" y="13" width="1" height="2" fill="#585858"/>
<rect x="674" y="1" width="1" height="14" fill="#6e6e6e"/>
<rect x="678" y="13" width="1" height="2" fill="#585858"/>
<rect x="682" y="13" width="1" height="2" fill="#585858"/>
<rect x="686" y="13" width="1" height="2" fill="#585858"/>
<rect x="690" y="13" width="1" height="2" fill="#585858"/>
<rect x="694" y="11" width="1" height="4" fill="#6e6e6e"/>
<rect x="698" y="13" width="1" height="2" fill="#585858"/>
<rect x="702" y="13" width="1" height="2" fill="#585858"/>
<rect x="705" y="13" width="1" height="2" fill="#585858"/>
<rect x="709" y="13" width="1" height="2" fill="#585858"/>
<rect x="713" y="1" width="1" height="14" fill="#6e6e6e"/>
<rect x="717" y="13" width="1" height="2" fill="#585858"/>
<rect x="721" y="13" width="1" height="2" fill="#585858"/>
<rect x="725" y="13" width="1" height="2" fill="#585858"/>
<rect x="729" y="13" width="1" height="2" fill="#585858"/>
<rect x="733" y="11" width="1" height="4" fill="#6e6e6e"/>
<rect x="737" y="13" width="1" height="2" fill="#585858"/>
<rect x="741" y="13" width="1" height="2" fill="#585858"/>
<rect x="744" y="13" width="1" height="2" fill="#585858"/>
<rect x="748" y="13" width="1" height="2" fill="#585858"/>
<rect x="752" y="1" width="1" height="14" fill="#6e6e6e"/>
<rect x="756" y="13" width="1" height="2" fill="#585858"/>
<rect x="760" y="13" width="1" height="2" fill="#585858"/>
<rect x="764" y="13" width="1" height="2" fill="#585858"/>
<rect x="768" y="13" width="1" height="2" fill="#585858"/>
<rect x="772" y="11" width="1" height="4" fill="#6e6e6e"/>
<rect x="776" y="13" width="1" height="2" fill="#585858"/>
<rect x="780" y="13" width="1" height="2" fill="#585858"/>
<rect x="783" y="13" width="1" height="2" fill="#585858"/>
<rect x="787" y="13" width="1" height="2" fill="#585858"/>
<rect x="791" y="1" width="1" height="14" fill="#6e6e6e"/>
<rect x="795" y="13" width="1" height="2" fill="#585858"/>
<rect x="799" y="13" width="1" height="2" fill="#585858"/>
<rect x="803" y="13" width="1" height="2" fill="#585858"/>
<rect x="807" y="13" width="1" height="2" fill="#585858"/>
<rect x="811" y="11" width="1" height="4" fill="#6e6e6e"/>
<rect x="815" y="13" width="1" height="2" fill="#585858"/>
<rect x="819" y="13" width="1" height="2" fill="#585858"/>
<rect x="823" y="13" width="1" height="2" fill="#585858"/>
<rect x="826" y="13" width="1" height="2" fill="#585858"/>
<rect x="830" y="1" width="1" height="14" fill="#6e6e6e"/>
<rect x="834" y="13" width="1" height="2" fill="#585858"/>
<rect x="838" y="13" width="1" height="2" fill="#585858"/>
<rect x="842" y="13" width="1" height="2" fill="#585858"/>
<rect x="846" y="13" width="1" height="2" fill="#585858"/>
<rect x="850" y="11" width="1" height="4" fill="#6e6e6e"/>
<rect x="854" y="13" width="1" height="2" fill="#585858"/>
<rect x="858" y="13" width="1" height="2" fill="#585858"/>
<rect x="862" y="13" width="1" height="2" fill="#585858"/>
<rect x="865" y="13" width="1" height="2" fill="#585858"/>
<rect x="869" y="1" width="1" height="14" fill="#6e6e6e"/>
<rect x="873" y="13" width="1" height="2" fill="#585858"/>
<rect x="877" y="13" width="1" height="2" fill="#585858"/>
<rect x="881" y="13" width="1" height="2" fill="#585858"/>
<rect x="885" y="13" width="1" height="2" fill="#585858"/>
<rect x="889" y="11" width="1" height="4" fill="#6e6e6e"/>
<rect x="893" y="13" width="1" height="2" fill="#585858"/>
<rect x="897" y="13" width="1" height="2" fill="#585858"/>
<rect x="901" y="13" width="1" height="2" fill="#585858"/>
<rect x="904" y="13" width="1" height="2" fill="#585858"/>
<rect x="908" y="1" width="1" height="14" fill="#6e6e6e"/>
<rect x="912" y="13" width="1" height="2" fill="#585858"/>
<rect x="916" y="13" width="1" height="2" fill="#585858"/>
<rect x="920" y="13" width="1" height="2" fill="#585858"/>
<rect x="924" y="13" width="1" height="2" fill="#585858"/>
<rect x="928" y="11" width="1" height="4" fill="#6e6e6e"/>
<rect x="932" y="13" width="1" height="2" fill="#585858"/>
<rect x="936" y="13" width="1" height="2" fill="#585858"/>
<rect x="940" y="13" width="1" height="2" fill="#585858"/>
<rect x="943" y="13" width="1" height="2" fill="#585858"/>
<rect x="947" y="1" width="1" height="14" fill="#6e6e6e"/>
<rect x="951" y="13" width="1" height="2" fill="#585858"/>
<rect x="955" y="13" width="1" height="2" fill="#585858"/>
<rect x="959" y="13" width="1" height="2" fill="#585858"/>
<rect x="963" y="13" width="1" height="2" fill="#585858"/>
<rect x="967" y="11" width="1" height="4" fill="#6e6e6e"/>
<rect x="971" y="13" width="1" height="2" fill="#585858"/>
<rect x="975" y="13" width="1" height="2" fill="#585858"/>
<rect x="979" y="13" width="1" height="2" fill="#585858"/>
<rect x="983" y="13" width="1" height="2" fill="#585858"/>
<rect x="986" y="1" width="1" height="14" fill="#6e6e6e"/>
<rect x="990" y="13" width="1" height="2" fill="#585858"/>
<rect x="994" y="13" width="1" height="2" fill="#585858"/>
<rect x="998" y="13" width="1" height="2" fill="#585858"/>
<rect x="1002" y="13" width="1" height="2" fill="#585858"/>
<rect x="1006" y="11" width="1" height="4" fill="#6e6e6e"/>
<rect x="1010" y="13" width="1" height="2" fill="#585858"/>
<rect x="1014" y="13" width="1" height="2" fill="#585858"/>
<rect x="1018" y="13" width="1" height="2" fill="#585858"/>
<rect x="1022" y="13" width="1" height="2" fill="#585858"/>
<rect x="1025" y="1" width="1" height="14" fill="#6e6e6e"/>
<rect x="1029" y="13" width="1" height="2" fill="#585858"/>
<rect x="1033" y="13" width="1" height="2" fill="#585858"/>
<rect x="1037" y="13" width="1" height="2" fill="#585858"/>
<rect x="1041" y="13" width="1" height="2" fill="#585858"/>
<rect x="1045" y="11" width="1" height="4" fill="#6e6e6e"/>
<rect x="1049" y="13" width="1" height="2" fill="#585858"/>
<rect x="1053" y="13" width="1" height="2" fill="#585858"/>
<rect x="1057" y="13" width="1" height="2" fill="#585858"/>
<rect x="1061" y="13" width="1" height="2" fill="#585858"/>
<rect x="1064" y="1" width="1" height="14" fill="#6e6e6e"/>
<rect x="1068" y="13" width="1" height="2" fill="#585858"/>
<rect x="1072" y="13" width="1" height="2" fill="#585858"/>
<rect x="1076" y="13" width="1" height="2" fill="#585858"/>
<rect x="1080" y="13" width="1" height="2" fill="#585858"/>
<rect x="1084" y="11" width="1" height="4" fill="#6e6e6e"/>
<rect x="1088" y="13" width="1" height="2" fill="#585858"/>
<rect x="1092" y="13" width="1" height="2" fill="#585858"/>
<rect x="1096" y="13" width="1" height="2" fill="#585858"/>
<rect x="1100" y="13" width="1" height="2" fill="#585858"/>
<rect x="1104" y="1" width="1" height="14" fill="#6e6e6e"/>
<rect x="1107" y="13" width="1" height="2" fill="#585858"/>
<rect x="1111" y="13" width="1" height="2" fill="#585858"/>
<rect x="1115" y="13" width="1" height="2" fill="#585858"/>
<rect x="1119" y="13" width="1" height="2" fill="#585858"/>
<rect x="1123" y="11" width="1" height="4" fill="#6e6e6e"/>
<rect x="1127" y="13" width="1" height="2" fill="#585858"/>
<rect x="1131" y="13" width="1" height="2" fill="#585858"/>
<rect x="1135" y="13" width="1" height="2" fill="#585858"/>
<rect x="1139" y="13" width="1" height="2" fill="#585858"/>
<rect x="1143" y="1" width="1" height="14" fill="#6e6e6e"/>
<rect x="1146" y="13" width="1" height="2" fill="#585858"/>
<rect x="1150" y="13" width="1" height="2" fill="#585858"/>
<rect x="1154" y="13" width="1" height="2" fill="#585858"/>
<rect x="1158" y="13" width="1" height="2" fill="#585858"/>
<rect x="1162" y="11" width="1" height="4" fill="#6e6e6e"/>
<rect x="1166" y="13" width="1" height="2" fill="#585858"/>
<rect x="1170" y="13" width="1" height="2" fill="#585858"/>
<rect x="1174" y="13" width="1" height="2" fill="#585858"/>
<rect x="1178" y="13" width="1" height="2" fill="#585858"/>
<rect x="1182" y="1" width="1" height="14" fill="#6e6e6e"/>
<rect x="1185" y="13" width="1" height="2" fill="#585858"/>
<rect x="1189" y="13" width="1" height="2" fill="#585858"/>
<rect x="1193" y="13" width="1" height="2" fill="#585858"/>
<rect x="1197" y="13" width="1" height="2" fill="#585858"/>
<rect x="1201" y="11" width="1" height="4" fill="#6e6e6e"/>
<rect x="1205" y="13" width="1" height="2" fill="#585858"/>
<rect x="1209" y="13" width="1" height="2" fill="#585858"/>
<rect x="1213" y="13" width="1" height="2" fill="#585858"/>
<rect x="1217" y="13" width="1" height="2" fill="#585858"/>
<rect x="1221" y="1" width="1" height="14" fill="#6e6e6e"/>
<rect x="1225" y="13" width="1" height="2" fill="#585858"/>
<rect x="1228" y="13" width="1" height="2" fill="#585858"/>
<rect x="1232" y="13" width="1" height="2" fill="#585858"/>
<rect x="1236" y="13" width="1" height="2" fill="#585858"/>
<rect x="1240" y="11" width="1" height="4" fill="#6e6e6e"/>
<rect x="1244" y="13" width="1" height="2" fill="#585858"/>
<rect x="1248" y="13" width="1" height="2" fill="#585858"/>
<rect x="1252" y="13" width="1" height="2" fill="#585858"/>
<rect x="1256" y="13" width="1" height="2" fill="#585858"/>
<rect x="1260" y="1" width="1" height="14" fill="#6e6e6e"/>
<rect x="1264" y="13" width="1" height="2" fill="#585858"/>
<rect x="1267" y="13" width="1" height="2" fill="#585858"/>
<rect x="1271" y="13" width="1" height="2" fill="#585858"/>
<rect x="1275" y="13" width="1" height="2" fill="#585858"/>
<rect x="1279" y="11" width="1" height="4" fill="#6e6e6e"/>
<rect x="1283" y="13" width="1" height="2" fill="#585858"/>
<rect x="1287" y="13" width="1" height="2" fill="#585858"/>
<rect x="1291" y="13" width="1" height="2" fill="#585858"/>
<rect x="1295" y="13" width="1" height="2" fill="#585858"/>
<rect x="1299" y="1" width="1" height="14" fill="#6e6e6e"/>
<rect x="1303" y="13" width="1" height="2" fill="#585858"/>
<rect x="1306" y="13" width="1" height="2" fill="#585858"/>
<rect x="1310" y="13" width="1" height="2" fill="#585858"/>
<rect x="1314" y="13" width="1" height="2" fill="#585858"/>
<rect x="1318" y="11" width="1" height="4" fill="#6e6e6e"/>
<rect x="1322" y="13" width="1" height="2" fill="#585858"/>
<rect x="1326" y="13" width="1" height="2" fill="#585858"/>
<rect x="1330" y="13" width="1" height="2" fill="#585858"/>
<rect x="1334" y="13" width="1" height="2" fill="#585858"/>
<rect x="1338" y="1" width="1" height="14" fill="#6e6e6e"/>
<rect x="1342" y="13" width="1" height="2" fill="#585858"/>
<rect x="1346" y="13" width="1" height="2" fill="#585858"/>
<rect x="1349" y="13" width="1" height="2" fill="#585858"/>
<rect x="1353" y="13" width="1" height="2" fill="#585858"/>
<rect x="1357" y="11" width="1" height="4" fill="#6e6e6e"/>
<rect x="1361" y="13" width="1" height="2" fill="#585858"/>
<rect x="1365" y="13" width="1" height="2" fill="#585858"/>
<rect x="1369" y="13" width="1" height="2" fill="#585858"/>
<rect x="1373" y="13" width="1" height="2" fill="#585858"/>
<rect x="1377" y="1" width="1" height="14" fill="#6e6e6e"/>
<rect x="1381" y="13" width="1" height="2" fill="#585858"/>
<rect x="1385" y="13" width="1" height="2" fill="#585858"/>
<rect x="1388" y="13" width="1" height="2" fill="#585858"/>
<rect x="1392" y="13" width="1" height="2" fill="#585858"/>
<rect x="1396" y="11" width="1" height="4" fill="#6e6e6e"/>
<rect x="1400" y="13" width="1" height="2" fill="#585858"/>
<rect x="1404" y="13" width="1" height="2" fill="#585858"/>
<rect x="1408" y="13" width="1" height="2" fill="#585858"/>
<rect x="1412" y="13" width="1" height="2" fill="#585858"/>
<rect x="1416" y="1" width="1" height="14" fill="#6e6e6e"/>
<rect x="1420" y="13" width="1" height="2" fill="#585858"/>
</svg><svg class="a" style="left:0;top:0" width="1424" height="16">
<text x="14" y="11" font-family="Liberation Sans" font-weight="bold" font-size="10" fill="#f0f0f0">40</text>
<text x="53" y="11" font-family="Liberation Sans" font-weight="bold" font-size="10" fill="#f0f0f0">30</text>
<text x="92" y="11" font-family="Liberation Sans" font-weight="bold" font-size="10" fill="#f0f0f0">20</text>
<text x="131" y="11" font-family="Liberation Sans" font-weight="bold" font-size="10" fill="#f0f0f0">10</text>
<text x="170" y="11" font-family="Liberation Sans" font-weight="bold" font-size="10" fill="#f0f0f0">0</text>
<text x="209" y="11" font-family="Liberation Sans" font-weight="bold" font-size="10" fill="#f0f0f0">10</text>
<text x="248" y="11" font-family="Liberation Sans" font-weight="bold" font-size="10" fill="#f0f0f0">20</text>
<text x="287" y="11" font-family="Liberation Sans" font-weight="bold" font-size="10" fill="#f0f0f0">30</text>
<text x="326" y="11" font-family="Liberation Sans" font-weight="bold" font-size="10" fill="#f0f0f0">40</text>
<text x="365" y="11" font-family="Liberation Sans" font-weight="bold" font-size="10" fill="#f0f0f0">50</text>
<text x="404" y="11" font-family="Liberation Sans" font-weight="bold" font-size="10" fill="#f0f0f0">60</text>
<text x="443" y="11" font-family="Liberation Sans" font-weight="bold" font-size="10" fill="#f0f0f0">70</text>
<text x="482" y="11" font-family="Liberation Sans" font-weight="bold" font-size="10" fill="#f0f0f0">80</text>
<text x="521" y="11" font-family="Liberation Sans" font-weight="bold" font-size="10" fill="#f0f0f0">90</text>
<text x="560" y="11" font-family="Liberation Sans" font-weight="bold" font-size="10" fill="#f0f0f0">100</text>
<text x="599" y="11" font-family="Liberation Sans" font-weight="bold" font-size="10" fill="#f0f0f0">110</text>
<text x="638" y="11" font-family="Liberation Sans" font-weight="bold" font-size="10" fill="#f0f0f0">120</text>
<text x="677" y="11" font-family="Liberation Sans" font-weight="bold" font-size="10" fill="#f0f0f0">130</text>
<text x="716" y="11" font-family="Liberation Sans" font-weight="bold" font-size="10" fill="#f0f0f0">140</text>
<text x="755" y="11" font-family="Liberation Sans" font-weight="bold" font-size="10" fill="#f0f0f0">150</text>
<text x="794" y="11" font-family="Liberation Sans" font-weight="bold" font-size="10" fill="#f0f0f0">160</text>
<text x="833" y="11" font-family="Liberation Sans" font-weight="bold" font-size="10" fill="#f0f0f0">170</text>
<text x="872" y="11" font-family="Liberation Sans" font-weight="bold" font-size="10" fill="#f0f0f0">180</text>
<text x="911" y="11" font-family="Liberation Sans" font-weight="bold" font-size="10" fill="#f0f0f0">190</text>
<text x="950" y="11" font-family="Liberation Sans" font-weight="bold" font-size="10" fill="#f0f0f0">200</text>
<text x="989" y="11" font-family="Liberation Sans" font-weight="bold" font-size="10" fill="#f0f0f0">210</text>
<text x="1028" y="11" font-family="Liberation Sans" font-weight="bold" font-size="10" fill="#f0f0f0">220</text>
<text x="1067" y="11" font-family="Liberation Sans" font-weight="bold" font-size="10" fill="#f0f0f0">230</text>
<text x="1107" y="11" font-family="Liberation Sans" font-weight="bold" font-size="10" fill="#f0f0f0">240</text>
<text x="1146" y="11" font-family="Liberation Sans" font-weight="bold" font-size="10" fill="#f0f0f0">250</text>
<text x="1185" y="11" font-family="Liberation Sans" font-weight="bold" font-size="10" fill="#f0f0f0">260</text>
<text x="1224" y="11" font-family="Liberation Sans" font-weight="bold" font-size="10" fill="#f0f0f0">270</text>
<text x="1263" y="11" font-family="Liberation Sans" font-weight="bold" font-size="10" fill="#f0f0f0">280</text>
<text x="1302" y="11" font-family="Liberation Sans" font-weight="bold" font-size="10" fill="#f0f0f0">290</text>
<text x="1341" y="11" font-family="Liberation Sans" font-weight="bold" font-size="10" fill="#f0f0f0">300</text>
<text x="1380" y="11" font-family="Liberation Sans" font-weight="bold" font-size="10" fill="#f0f0f0">310</text>
<text x="1419" y="11" font-family="Liberation Sans" font-weight="bold" font-size="10" fill="#f0f0f0">320</text>
</svg></div>
<div id="paste" class="a"></div>
<div id="page" class="a"></div>
<svg class="a" style="left:0;top:0" width="1500" height="1000"><defs><linearGradient id="dg" gradientUnits="userSpaceOnUse" x1="0" y1="174" x2="0" y2="994"><stop offset="0" stop-color="#4184c6"/><stop offset="0.5" stop-color="#5f7acc"/><stop offset="1" stop-color="#7c76d6"/></linearGradient></defs><line x1="167.5" y1="174" x2="1327.5" y2="994" stroke="url(#dg)" stroke-width="1"/><line x1="1327.5" y1="174" x2="167.5" y2="994" stroke="url(#dg)" stroke-width="1"/></svg>
<div id="ptext">
<div class="a" style="left:213px;top:464px;font-size:40px;color:#fff;white-space:nowrap;line-height:50px">StudioToday<span style="position:absolute;left:220px;top:4px;font-size:29px;line-height:30px;-webkit-text-stroke:0.5px #fff">®</span></div>
<div class="a" style="left:755px;top:465px;font-size:38.3px;font-weight:bold;color:#fff;white-space:nowrap;line-height:49px;-webkit-text-stroke:0.7px #fff;word-spacing:-3.5px;letter-spacing:0.63px">A Portfolio of Graphic</div><div class="a" style="left:755px;top:514px;font-size:38.3px;font-weight:bold;color:#fff;white-space:nowrap;line-height:49px;-webkit-text-stroke:0.7px #fff;word-spacing:-3.5px;letter-spacing:0.45px">Design and Photography</div>
<div class="a" style="left:214px;top:932px;font-size:16.5px;color:#fff;letter-spacing:0.75px;white-space:nowrap;line-height:18px">2024–2025</div>
<div class="a" style="left:756px;top:910px;font-size:11.5px;color:#f0ecf4;letter-spacing:-0.5px;white-space:nowrap;line-height:13.4px">StudioToday<span style="font-size:7px;position:relative;top:-3px">®</span><br>Langekapellerlaan 2,<br>6097 CL London</div>
<div class="a" style="left:892px;top:910px;font-size:11.5px;color:#f0ecf4;letter-spacing:-0.45px;white-space:nowrap;line-height:13.4px">studiotoday.com<br>hello@studiotoday.com<br>+31612345678</div>
<div class="a" style="left:1027px;top:910px;font-size:11.5px;color:#f0ecf4;letter-spacing:-0.32px;white-space:nowrap;line-height:13.4px">Facebook/studiotoday<br>Instagram/studiotoday<br>Twitter/studiotoday</div>
</div>
<div class="a" style="left:1327px;top:174px;width:2px;height:810px;background:#0c0c0c"></div>
<svg class="a" style="left:0;top:0" width="1500" height="1000" viewBox="0 0 1500 1000">
<defs><linearGradient id="vg" gradientUnits="userSpaceOnUse" x1="0" y1="221" x2="0" y2="947"><stop offset="0" stop-color="#4e3c72"/><stop offset="0.5" stop-color="#4c437c"/><stop offset="1" stop-color="#54528c"/></linearGradient></defs>
<g shape-rendering="crispEdges" stroke-width="1">
<line x1="330.5" y1="221.5" x2="330.5" y2="947.5" stroke="url(#vg)"/>
<line x1="350.5" y1="221.5" x2="350.5" y2="947.5" stroke="url(#vg)"/>
<line x1="466.5" y1="221.5" x2="466.5" y2="947.5" stroke="url(#vg)"/>
<line x1="485.5" y1="221.5" x2="485.5" y2="947.5" stroke="url(#vg)"/>
<line x1="601.5" y1="221.5" x2="601.5" y2="947.5" stroke="url(#vg)"/>
<line x1="621.5" y1="221.5" x2="621.5" y2="947.5" stroke="url(#vg)"/>
<line x1="737.5" y1="221.5" x2="737.5" y2="947.5" stroke="url(#vg)"/>
<line x1="756.5" y1="221.5" x2="756.5" y2="947.5" stroke="url(#vg)"/>
<line x1="872.5" y1="221.5" x2="872.5" y2="947.5" stroke="url(#vg)"/>
<line x1="892.5" y1="221.5" x2="892.5" y2="947.5" stroke="url(#vg)"/>
<line x1="1008.5" y1="221.5" x2="1008.5" y2="947.5" stroke="url(#vg)"/>
<line x1="1027.5" y1="221.5" x2="1027.5" y2="947.5" stroke="url(#vg)"/>
<line x1="1143.5" y1="221.5" x2="1143.5" y2="947.5" stroke="url(#vg)"/>
<line x1="1163.5" y1="221.5" x2="1163.5" y2="947.5" stroke="url(#vg)"/>
<line x1="167.5" y1="221.5" x2="1327.5" y2="221.5" stroke="#15937f"/>
<line x1="167.5" y1="325.5" x2="1327.5" y2="325.5" stroke="#15937f"/>
<line x1="167.5" y1="345.5" x2="1327.5" y2="345.5" stroke="#15937f"/>
<line x1="167.5" y1="449.5" x2="1327.5" y2="449.5" stroke="#15937f"/>
<line x1="167.5" y1="469.5" x2="1327.5" y2="469.5" stroke="#15937f"/>
<line x1="167.5" y1="573.5" x2="1327.5" y2="573.5" stroke="#5a80a6"/>
<line x1="167.5" y1="593.5" x2="1327.5" y2="593.5" stroke="#5a80a6"/>
<line x1="167.5" y1="698.5" x2="1327.5" y2="698.5" stroke="#5a80a6"/>
<line x1="167.5" y1="718.5" x2="1327.5" y2="718.5" stroke="#5a80a6"/>
<line x1="167.5" y1="822.5" x2="1327.5" y2="822.5" stroke="#5a80a6"/>
<line x1="167.5" y1="842.5" x2="1327.5" y2="842.5" stroke="#5a80a6"/>
<line x1="167.5" y1="947.5" x2="1327.5" y2="947.5" stroke="#5a80a6"/>
<line x1="167.5" y1="970.5" x2="1327.5" y2="970.5" stroke="#5a80a6"/>
<line x1="214.5" y1="174" x2="214.5" y2="221.5" stroke="#1e9ca0"/>
<line x1="1279.5" y1="174" x2="1279.5" y2="221.5" stroke="#1e9ca0"/>
<line x1="214.5" y1="221.5" x2="214.5" y2="994" stroke="url(#vg)"/>
<line x1="1279.5" y1="221.5" x2="1279.5" y2="994" stroke="url(#vg)"/>
<line x1="214.5" y1="221.5" x2="1279.5" y2="221.5" stroke="#6b3b6f"/>
<line x1="214.5" y1="947.5" x2="1279.5" y2="947.5" stroke="#5a3f72"/>
<line x1="214.5" y1="644.5" x2="1279.5" y2="644.5" stroke="#4f4b9c"/>
<line x1="214.5" y1="932.5" x2="303" y2="932.5" stroke="#4f4b9c"/><line x1="302.5" y1="932.5" x2="302.5" y2="947" stroke="#4f4b9c"/>
<line x1="756.5" y1="909.5" x2="872.5" y2="909.5" stroke="#4f4b9c"/>
<line x1="892.5" y1="909.5" x2="1008.5" y2="909.5" stroke="#4f4b9c"/>
<line x1="1027.5" y1="909.5" x2="1143.5" y2="909.5" stroke="#4f4b9c"/>
</g>


</svg>
<div id="tools">
<div class="a" style="left:10px;top:180px;width:68px;height:431px;background:#353535;border:1px solid #2b2b2b;border-radius:3px 3px 0 0"></div>
<div class="a" style="left:10px;top:180px;width:68px;height:13px;background:#282828;border-radius:3px 3px 0 0"></div>
<div class="a" style="left:79px;top:180px;width:37px;height:52px;background:#353535;border:1px solid #2b2b2b;border-radius:3px 3px 0 0"></div>
<div class="a" style="left:79px;top:180px;width:37px;height:13px;background:#282828;border-radius:3px 3px 0 0"></div>
<svg class="a" style="left:0;top:170px" width="130" height="450">
<g stroke="#c8c8c8" stroke-width="1.1" fill="none">
<path d="M15.5 14 L21 19.5 M21 14 L15.5 19.5"/><path d="M68 14.5 L65.5 17 L68 19.5 M71.5 14.5 L69 17 L71.5 19.5" stroke="#a8a8a8"/>
<path d="M85 14 L90.5 19.5 M90.5 14 L85 19.5"/><path d="M102.5 14.5 L105 17 L102.5 19.5 M106 14.5 L108.5 17 L106 19.5" stroke="#a8a8a8"/>
</g>
<g fill="#262626"><rect x="34" y="25" width="1" height="4"/><rect x="36" y="25" width="1" height="4"/><rect x="38" y="25" width="1" height="4"/><rect x="40" y="25" width="1" height="4"/><rect x="42" y="25" width="1" height="4"/><rect x="44" y="25" width="1" height="4"/><rect x="46" y="25" width="1" height="4"/><rect x="48" y="25" width="1" height="4"/><rect x="50" y="25" width="1" height="4"/><rect x="88" y="25" width="1" height="4"/><rect x="90" y="25" width="1" height="4"/><rect x="92" y="25" width="1" height="4"/><rect x="94" y="25" width="1" height="4"/><rect x="96" y="25" width="1" height="4"/><rect x="98" y="25" width="1" height="4"/><rect x="100" y="25" width="1" height="4"/><rect x="102" y="25" width="1" height="4"/><rect x="104" y="25" width="1" height="4"/></g>
<rect x="17" y="38" width="26" height="20" fill="#232323"/>
<rect x="11" y="106" width="66" height="1" fill="#2c2c2c"/>
<rect x="11" y="178" width="66" height="1" fill="#2c2c2c"/>
<rect x="11" y="226" width="66" height="1" fill="#2c2c2c"/>
<rect x="11" y="274" width="66" height="1" fill="#2c2c2c"/>
<path d="M25.5 40.5 L36.5 50 L30.5 50.5 L26 56 Z" fill="none" stroke="#c8c8c8" stroke-width="1.2"/>
<path d="M54 40 L65 50 L59 50.5 L54.5 56.5 Z" fill="#c8c8c8"/>


<g fill="none" stroke="#c8c8c8" stroke-width="1.2">
<path d="M30 76.5 H24.5 V62.5 H31 L34.5 66 V70"/><path d="M31 62.5 V66 H34.5"/>
</g>
<path d="M33 72 L38.5 75.5 L33 79 Z" fill="#c8c8c8"/>
<g stroke="#c8c8c8" stroke-width="1.3" fill="none"><path d="M51 62.5 V77 M66 62.5 V77 M53.5 70 H63.5 M55.5 68 L53.5 70 L55.5 72 M61.5 68 L63.5 70 L61.5 72"/></g>
<g fill="none" stroke="#c8c8c8" stroke-width="1.3"><path d="M23.5 90 V101.5 H36.5 V90"/><path d="M27 86 L31 90 M31 87.5 V90 H28.5"/></g>
<g fill="#c8c8c8"><rect x="26" y="94" width="1.6" height="1.6"/><rect x="29" y="94" width="1.6" height="1.6"/><rect x="32" y="94" width="1.6" height="1.6"/><rect x="26" y="97.5" width="1.6" height="1.6"/><rect x="29" y="97.5" width="1.6" height="1.6"/><rect x="32" y="97.5" width="1.6" height="1.6"/></g>
<g fill="none" stroke="#c8c8c8" stroke-width="1.3"><path d="M52 90 V101.5 H65 V90"/><path d="M61 89 L65 85 M62 85 H65 V88"/></g>
<g fill="#c8c8c8"><rect x="54.5" y="94" width="1.6" height="1.6"/><rect x="57.5" y="94" width="1.6" height="1.6"/><rect x="60.5" y="94" width="1.6" height="1.6"/><rect x="54.5" y="97.5" width="1.6" height="1.6"/><rect x="57.5" y="97.5" width="1.6" height="1.6"/><rect x="60.5" y="97.5" width="1.6" height="1.6"/></g>
<text x="30" y="126" font-family="Liberation Serif" font-size="18" fill="#c8c8c8" text-anchor="middle">T</text>
<path d="M53 126 L65.5 113" stroke="#c8c8c8" stroke-width="1.3"/>
<g fill="#d0d0d0"><path d="M38.5 127 L41.5 124 V127 Z"/><path d="M38.5 149 L41.5 146 V149 Z"/><path d="M67.5 149 L70.5 146 V149 Z"/><path d="M38.5 173 L41.5 170 V173 Z"/><path d="M67.5 173 L70.5 170 V173 Z"/><path d="M67.5 198 L70.5 195 V198 Z"/><path d="M68 435 L71 432 V435 Z"/><path d="M67.5 244 L70.5 241 V244 Z"/><path d="M31 374 L34 371 V374 Z"/></g>
<g fill="#c8c8c8">
<path d="M31.5 136 L35.5 140 L33 142.5 L29 138.5 Z"/><path d="M28.5 139 L32.5 143 L30 148 L23 150.5 L25.5 143.5 Z"/>
<path d="M61.5 136 L65.5 140 L63 142.5 L59 138.5 Z"/><path d="M58.3 139.2 L62.3 143.2 L55 150.5 L52 150.5 L51 149.5 L51 146.5 Z"/>
</g>
<path d="M25.5 150 L29.5 146" stroke="#353535" stroke-width="1"/>
<g fill="none" stroke="#c8c8c8" stroke-width="1.3"><rect x="22.7" y="158.7" width="14.6" height="13.6"/><path d="M23 159 L37 172 M37 159 L23 172"/><rect x="51.7" y="158.7" width="14.6" height="13.6" fill="#4a4a4a"/></g>
<g fill="none" stroke="#c8c8c8" stroke-width="1.3"><circle cx="35" cy="185.5" r="2.5"/><circle cx="35" cy="196" r="2.5"/><path d="M22.5 186 L33 194 M22.5 195.5 L33 187.5"/></g>
<g fill="none" stroke="#c8c8c8" stroke-width="1.2"><path d="M57 187.5 H52 V198.5 H57"/><path d="M56 184 H63 M61 182 L63 184 L61 186" stroke-width="1.3"/></g>
<path d="M57.5 198.5 L61.5 187.5 H67 L63 198.5 Z" fill="#c8c8c8"/>
<defs><linearGradient id="gr1" x1="0" x2="1"><stop offset="0" stop-color="#222"/><stop offset="1" stop-color="#eee"/></linearGradient><linearGradient id="gr2" x1="0" x2="1"><stop offset="0" stop-color="#fff"/><stop offset="1" stop-color="#333"/></linearGradient>
<pattern id="chk" width="4" height="4" patternUnits="userSpaceOnUse"><rect width="4" height="4" fill="#2a2a2a"/><rect width="2" height="2" fill="#7a7a7a"/><rect x="2" y="2" width="2" height="2" fill="#7a7a7a"/></pattern></defs>
<rect x="22.5" y="207.5" width="15" height="13.5" fill="url(#gr1)" stroke="#c8c8c8" stroke-width="1"/>
<rect x="51.5" y="207.5" width="15" height="13.5" fill="url(#chk)" stroke="#c8c8c8" stroke-width="1"/>
<path d="M23.5 232 H37 V242 L34 245 H23.5 Z" fill="#c8c8c8"/><path d="M26 235.5 H34 M26 238.5 H34 M26 241.5 H31" stroke="#353535" stroke-width="1"/><path d="M34 245 V242 H37" fill="#353535"/>
<g fill="none" stroke="#c8c8c8" stroke-width="1.2"><path d="M61 239 L55 245 Q52.5 247.5 52 245.5 Q51 244 53.5 241.5 L59.5 235.5"/></g>
<path d="M58.5 234 L63 238.5 L65 236.5 Q67.5 234 65.5 232 L64.5 231 Q62.5 229 60.5 231.5 Z" fill="#c8c8c8"/>
<path d="M25 261 Q22.5 257 23.5 255 Q24.5 254 26 256 L27 257.5 V249 Q27 247.5 28.3 247.5 Q29.5 247.5 29.5 249 V255 V247 Q29.5 245.5 30.8 245.5 Q32 245.5 32 247 V255 V248 Q32 246.5 33.3 246.5 Q34.5 246.5 34.5 248 V255 V250 Q34.5 248.5 35.8 248.5 Q37 248.5 37 250 V257 Q37 261.5 34 263 H28 Z" fill="#c8c8c8" transform="translate(0 9)"/>
<g fill="none" stroke="#c8c8c8" stroke-width="1.4"><circle cx="57.5" cy="261" r="5.5"/><path d="M61.5 265 L66.5 270" stroke-width="1.8"/></g>
<rect x="38" y="298" width="32" height="32" fill="#fff"/><rect x="47" y="307" width="14" height="14" fill="#2d2d2d"/><path d="M38.5 329.5 L69.5 298.5" stroke="#e3101e" stroke-width="2.2"/>
<rect x="19" y="280" width="35" height="34.5" fill="#353535"/><rect x="19" y="280" width="34" height="33.5" fill="#fff"/><path d="M19.5 313 L52.5 280.5" stroke="#e3101e" stroke-width="2.2"/>
<g fill="none" stroke="#c8c8c8" stroke-width="1.3"><path d="M64.5 290 Q64 284 69 283.5 L71 283.5"/><path d="M68.5 281.5 L71 283.5 L68.5 285.5 M62.5 287.5 L64.5 290 L66.5 287.5"/></g>
<rect x="19.5" y="317.5" width="7.5" height="7.5" fill="#fff" stroke="#c8c8c8"/><path d="M20.5 324 L26 318.5" stroke="#e3101e" stroke-width="1"/><rect x="23.5" y="321.5" width="7.5" height="7.5" fill="#1f1f1f" stroke="#c8c8c8"/>
<rect x="24" y="339.5" width="17" height="15" fill="#1f1f1f"/><rect x="29" y="343" width="7.5" height="7.5" fill="#6a6a6a" stroke="#c8c8c8" stroke-width="1"/>
<text x="54.5" y="350" font-family="Liberation Serif" font-weight="bold" font-size="12" fill="#c8c8c8" text-anchor="middle">T</text>
<rect x="19.5" y="363.5" width="11" height="11" fill="#d3dbf2" stroke="#9a9a9a" stroke-width="1"/>
<rect x="38.5" y="363.5" width="11" height="11" fill="url(#gr2)" stroke="#9a9a9a" stroke-width="1"/>
<rect x="48" y="360" width="30" height="19" fill="#3a2a30" opacity="0.6"/>
<rect x="55" y="361" width="17" height="17" fill="#1f1f1f"/><rect x="57.5" y="363.5" width="12" height="12" fill="#fff"/><path d="M58 375 L69 364" stroke="#6a3a1a" stroke-width="1.6"/>
<g fill="#c8c8c8"><rect x="28" y="391" width="10" height="7"/><rect x="24" y="391" width="2" height="1.5"/><rect x="24" y="395" width="2" height="1.5"/><rect x="24" y="398.5" width="2" height="1.5"/><rect x="29" y="387" width="1.5" height="2"/><rect x="32" y="387" width="1.5" height="2"/><rect x="35" y="387" width="1.5" height="2"/><rect x="26" y="389" width="2" height="1.5"/></g>
<rect x="17" y="413" width="26" height="21" fill="#1f1f1f"/>
<rect x="25" y="418.5" width="11.5" height="11" fill="#c8c8c8"/><rect x="26.5" y="420" width="8.5" height="8" fill="#555"/><rect x="27.5" y="421" width="4" height="3" fill="#c8c8c8"/><rect x="30" y="424.5" width="4" height="3" fill="#c8c8c8"/><rect x="28.3" y="421.8" width="2.4" height="1.4" fill="#555"/>
<rect x="54.5" y="418.5" width="11" height="11" fill="#5a5a5a" stroke="#c8c8c8" stroke-width="1.2"/><path d="M55 421.5 H65 M55 424.5 H65 M55 427 H65 M58 421 V429 M61.5 421 V429" stroke="#7a7a7a" stroke-width="0.7"/>
<path d="M100 37 H107.5 V50 H106 V38.5 H104.5 V50 H103 V44 H100 A3.5 3.5 0 0 1 100 37 Z" fill="#c8c8c8"/>
<g fill="none" stroke="#c8c8c8" stroke-width="1.3"><rect x="90.5" y="45.5" width="6" height="6" fill="#353535"/><rect x="93.5" y="49.5" width="6" height="6" fill="#353535"/></g>
</svg>
</div>
<div id="pages" class="a">
<div class="a" style="left:0;top:0;width:76px;height:4px;background:#1e1e1e"></div>
<div class="a" style="left:0;top:4px;width:60px;height:25px;background:#343434"></div>
<div class="a" style="left:60px;top:4px;width:16px;height:25px;background:#282828"></div>
<div class="a" style="left:0;top:0;width:1px;height:861px;background:#262626"></div>
<svg class="a" style="left:6px;top:13px" width="8" height="10"><path d="M1.5 4 L4 1.5 L6.5 4 M1.5 6 L4 8.5 L6.5 6" fill="none" stroke="#aaa" stroke-width="1"/></svg>
<div class="ui" style="left:18px;top:11px;font-size:11.5px;font-weight:bold;color:#f0f0f0">Pages</div>
<div class="ui" style="left:3px;top:37px;font-size:10px;font-weight:bold;color:#e8e8e8">[None]</div>
<div class="ui" style="left:3px;top:65px;font-size:10px;font-weight:bold;color:#e8e8e8">A-Parent</div>
<div class="a" style="left:1px;top:147px;width:75px;height:1px;background:#3c3c3c"></div>
</div>
<svg class="a" style="left:1424px;top:123px" width="76" height="861" viewBox="1424 122 76 861">
<g fill="#c0c0c0"><rect x="1428" y="281" width="5" height="1"/><rect x="1428" y="283" width="5" height="1"/><rect x="1428" y="285" width="5" height="1"/><rect x="1428" y="287" width="5" height="1"/><rect x="1428" y="289" width="5" height="1"/></g>
<text x="1468" y="290" font-family="Liberation Sans" font-weight="bold" font-size="10.5" fill="#f0f0f0" text-anchor="middle">A4 H</text>

<clipPath id="pc"><rect x="1425" y="301" width="75" height="683"/></clipPath><g clip-path="url(#pc)">
<rect x="1440" y="903" width="60" height="43" fill="#1f3d33"/>
<rect x="1447" y="296" width="49" height="35" fill="#fff"/>
<g fill="#3a3a3a"><rect x="1449" y="308" width="10" height="4"/><rect x="1460" y="308" width="10" height="4"/><rect x="1449" y="314" width="10" height="3"/><rect x="1460" y="314" width="10" height="3"/><rect x="1449" y="319" width="10" height="3"/><rect x="1460" y="319" width="10" height="3"/></g>
<rect x="1467" y="296" width="9" height="9" fill="#fff"/><text x="1471.5" y="304.5" font-family="Liberation Sans" font-size="10" fill="#000" text-anchor="middle">A</text>
<text x="1470.5" y="346" font-family="Liberation Sans" font-weight="bold" font-size="10.5" fill="#f0f0f0" text-anchor="middle">5</text>
<rect x="1447" y="357" width="49" height="35" fill="#221c38"/>
<rect x="1448" y="358" width="12" height="17" fill="#2a2a2a"/><circle cx="1454" cy="365" r="3" fill="#aaa"/><rect x="1460" y="358" width="12" height="17" fill="#bbb"/><circle cx="1466" cy="366" r="4" fill="#777"/>
<rect x="1473" y="359" width="10" height="4" fill="#c8c0d8"/><rect x="1485" y="359" width="10" height="4" fill="#c8c0d8"/>
<rect x="1449" y="377" width="10" height="4" fill="#c8c0d8"/><rect x="1460" y="375" width="12" height="16" fill="#555"/><rect x="1472" y="375" width="23" height="16" fill="#8a8a8a"/><circle cx="1480" cy="383" r="5" fill="#bbb"/>
<rect x="1467" y="357" width="9" height="9" fill="#fff"/><text x="1471.5" y="365.5" font-family="Liberation Sans" font-size="10" fill="#000" text-anchor="middle">A</text>
<text x="1470.5" y="407" font-family="Liberation Sans" font-weight="bold" font-size="10.5" fill="#f0f0f0" text-anchor="middle">6</text>
<rect x="1447" y="418" width="49" height="35" fill="#221c38"/>
<rect x="1448" y="419" width="23" height="17" fill="#9a9a9a"/><circle cx="1455" cy="426" r="4" fill="#ccc"/><circle cx="1464" cy="429" r="4" fill="#666"/>
<rect x="1475" y="421" width="8" height="4" fill="#c8c0d8"/><rect x="1485" y="421" width="9" height="4" fill="#c8c0d8"/>
<rect x="1449" y="437" width="10" height="5" fill="#c8c0d8"/><rect x="1472" y="436" width="12" height="16" fill="#444"/><rect x="1484" y="436" width="11" height="16" fill="#aaa"/>
<rect x="1467" y="418" width="9" height="9" fill="#fff"/><text x="1471.5" y="426.5" font-family="Liberation Sans" font-size="10" fill="#000" text-anchor="middle">A</text>
<text x="1470.5" y="468" font-family="Liberation Sans" font-weight="bold" font-size="10.5" fill="#f0f0f0" text-anchor="middle">7</text>
<rect x="1447" y="479" width="49" height="35" fill="#fff"/><rect x="1447" y="495" width="49" height="19" fill="#c9d1e8"/><rect x="1471" y="495" width="1" height="19" fill="#e4e8f4"/>
<rect x="1449" y="481" width="17" height="3" fill="#111"/><rect x="1449" y="484" width="17" height="1" fill="#555"/><rect x="1475" y="481" width="8" height="10" fill="#444"/><rect x="1484" y="481" width="10" height="8" fill="#444"/>
<rect x="1467" y="479" width="9" height="9" fill="#fff"/><text x="1471.5" y="487.5" font-family="Liberation Sans" font-size="10" fill="#000" text-anchor="middle">A</text>
<text x="1470.5" y="529" font-family="Liberation Sans" font-weight="bold" font-size="10.5" fill="#f0f0f0" text-anchor="middle">8</text>
<rect x="1447" y="540" width="49" height="35" fill="#c9d1e8"/><rect x="1488" y="540" width="8" height="16" fill="#fff"/><rect x="1447" y="556" width="6" height="19" fill="#fff"/><rect x="1447" y="556" width="49" height="1" fill="#e4e8f4"/><rect x="1471" y="556" width="1" height="19" fill="#e4e8f4"/>
<rect x="1489" y="541" width="5" height="3" fill="#444"/><rect x="1448" y="557" width="4" height="3" fill="#444"/>
<rect x="1467" y="540" width="9" height="9" fill="#fff"/><text x="1471.5" y="548.5" font-family="Liberation Sans" font-size="10" fill="#000" text-anchor="middle">A</text>
<text x="1470.5" y="590" font-family="Liberation Sans" font-weight="bold" font-size="10.5" fill="#f0f0f0" text-anchor="middle">9</text>
<rect x="1447" y="601" width="49" height="35" fill="#c9d1e8"/><rect x="1447" y="601" width="49" height="11" fill="#fff"/>
<rect x="1448" y="602" width="19" height="3" fill="#111"/><rect x="1448" y="605" width="19" height="1.5" fill="#444"/><rect x="1476" y="602" width="6" height="6" fill="#555"/><rect x="1484" y="602" width="10" height="6" fill="#555"/>
<rect x="1467" y="601" width="9" height="9" fill="#fff"/><text x="1471.5" y="609.5" font-family="Liberation Sans" font-size="10" fill="#000" text-anchor="middle">A</text>
<text x="1470.5" y="651" font-family="Liberation Sans" font-weight="bold" font-size="10.5" fill="#f0f0f0" text-anchor="middle">10</text>
<rect x="1447" y="662" width="49" height="35" fill="#c9d1e8"/><rect x="1488" y="662" width="8" height="35" fill="#fff"/><rect x="1471" y="662" width="1" height="35" fill="#e4e8f4"/>
<rect x="1489" y="663" width="5" height="5" fill="#555"/>
<rect x="1467" y="662" width="9" height="9" fill="#fff"/><text x="1471.5" y="670.5" font-family="Liberation Sans" font-size="10" fill="#000" text-anchor="middle">A</text>
<text x="1470.5" y="712" font-family="Liberation Sans" font-weight="bold" font-size="10.5" fill="#f0f0f0" text-anchor="middle">11</text>
<rect x="1447" y="723" width="49" height="35" fill="#c9d1e8"/><rect x="1447" y="723" width="24" height="35" fill="#fff"/>
<rect x="1448" y="724" width="19" height="2" fill="#111"/><rect x="1448" y="727" width="19" height="1" fill="#333"/><rect x="1448" y="733" width="9" height="3" fill="#3a3a3a"/><rect x="1448" y="737" width="9" height="3" fill="#3a3a3a"/><rect x="1448" y="741" width="9" height="2" fill="#3a3a3a"/><rect x="1448" y="745" width="10" height="3" fill="#222"/><rect x="1465" y="735" width="4" height="4" fill="#555"/>
<rect x="1467" y="723" width="9" height="9" fill="#fff"/><text x="1471.5" y="731.5" font-family="Liberation Sans" font-size="10" fill="#000" text-anchor="middle">A</text>
<text x="1470.5" y="773" font-family="Liberation Sans" font-weight="bold" font-size="10.5" fill="#f0f0f0" text-anchor="middle">12</text>
<rect x="1447" y="785" width="49" height="35" fill="#c9d1e8"/><rect x="1471" y="785" width="25" height="14" fill="#fff"/>
<rect x="1475" y="786" width="9" height="4" fill="#555"/><rect x="1485" y="786" width="10" height="4" fill="#555"/>
<rect x="1467" y="785" width="9" height="9" fill="#fff"/><text x="1471.5" y="793.5" font-family="Liberation Sans" font-size="10" fill="#000" text-anchor="middle">A</text>
<text x="1470.5" y="835" font-family="Liberation Sans" font-weight="bold" font-size="10.5" fill="#f0f0f0" text-anchor="middle">13</text>
<rect x="1447" y="846" width="49" height="35" fill="#fff"/>
<rect x="1448" y="847" width="18" height="3" fill="#444"/><rect x="1448" y="850" width="18" height="3" fill="#555"/><rect x="1448" y="853" width="18" height="2" fill="#333"/><rect x="1472" y="865" width="11" height="4" fill="#444"/><rect x="1484" y="865" width="11" height="4" fill="#444"/>
<rect x="1467" y="846" width="9" height="9" fill="#fff"/><text x="1471.5" y="854.5" font-family="Liberation Sans" font-size="10" fill="#000" text-anchor="middle">A</text>
<text x="1470.5" y="896" font-family="Liberation Sans" font-weight="bold" font-size="10.5" fill="#f0f0f0" text-anchor="middle">14</text>
<rect x="1447" y="907" width="49" height="35" fill="#8e9ee0"/><rect x="1447" y="907" width="49" height="10" fill="#98a6e2"/><rect x="1456" y="917" width="15" height="25" fill="#7d9ad8"/><rect x="1471" y="917" width="25" height="25" fill="#9fb0e8"/>
<rect x="1473" y="919" width="10" height="5" fill="#4a78c0"/><rect x="1484" y="918" width="10" height="5" fill="#4a78c0"/><rect x="1473" y="933" width="4" height="5" fill="#4a78c0"/>
<rect x="1467" y="907" width="9" height="9" fill="#d8f0e0"/><text x="1471.5" y="915.5" font-family="Liberation Sans" font-weight="bold" font-size="10" fill="#0a3a1a" text-anchor="middle">A</text>
<rect x="1446.5" y="295.5" width="50" height="36" fill="none" stroke="#8c8c8c" stroke-width="1"/><rect x="1446.5" y="356.5" width="50" height="36" fill="none" stroke="#8c8c8c" stroke-width="1"/><rect x="1446.5" y="417.5" width="50" height="36" fill="none" stroke="#8c8c8c" stroke-width="1"/><rect x="1446.5" y="478.5" width="50" height="36" fill="none" stroke="#8c8c8c" stroke-width="1"/><rect x="1446.5" y="539.5" width="50" height="36" fill="none" stroke="#8c8c8c" stroke-width="1"/><rect x="1446.5" y="600.5" width="50" height="36" fill="none" stroke="#8c8c8c" stroke-width="1"/><rect x="1446.5" y="661.5" width="50" height="36" fill="none" stroke="#8c8c8c" stroke-width="1"/><rect x="1446.5" y="722.5" width="50" height="36" fill="none" stroke="#8c8c8c" stroke-width="1"/><rect x="1446.5" y="784.5" width="50" height="36" fill="none" stroke="#8c8c8c" stroke-width="1"/><rect x="1446.5" y="845.5" width="50" height="36" fill="none" stroke="#8c8c8c" stroke-width="1"/><rect x="1446.5" y="906.5" width="50" height="36" fill="none" stroke="#5a8a70" stroke-width="1"/><rect x="1461" y="947" width="19" height="2" fill="#6a6ad0"/>
</g>
<rect x="1424" y="960" width="76" height="1" fill="#2a2a2a"/>
<text x="1430" y="977" font-family="Liberation Sans" font-weight="bold" font-size="10.5" fill="#ececec" letter-spacing="-0.2">16 Pages in 16 Spreads</text>
</svg>
<div id="status" class="a">
<div class="a" style="left:92px;top:0;width:86px;height:16px;background:#1e1e1e;border:1px solid #454545;border-top:none"></div>
<div class="a" style="left:160px;top:1px;width:1px;height:14px;background:#454545"></div>
<div class="ui" style="left:0;top:2px;color:#dcdcdc;font-size:10px">8,57%</div>
<svg class="a" style="left:0;top:0" width="500" height="16"><g fill="none" stroke-width="1.2">
<path d="M35 6 L38 9 L41 6" stroke="#cfcfcf"/>
<path d="M54.5 4 V12" stroke="#666"/><path d="M62 4 L56.5 8 L62 12 Z" fill="#666" stroke="none"/>
<path d="M80 4 L74.5 8 L80 12 Z" fill="#666" stroke="none"/>
<path d="M166 6 L169 9 L172 6" stroke="#cfcfcf"/>
<path d="M190 4 L195.5 8 L190 12 Z" fill="#bdbdbd" stroke="none"/>
<path d="M208 4 L213.5 8 L208 12 Z" fill="#bdbdbd" stroke="none"/><path d="M215.5 4 V12" stroke="#bdbdbd" stroke-width="1.6"/>
<path d="M362 6 L365 9 L368 6" stroke="#cfcfcf"/>
<path d="M459 6 L462 9 L465 6" stroke="#cfcfcf"/>
</g>
<path d="M233 13 Q232 4 239 3.5 Q245 4 245 10 L243 13 Z" fill="#b8b8b8"/><path d="M237 13 V8 Q237 6.5 239 6.5 L241 7.5" fill="none" stroke="#2c2c2c" stroke-width="1.2"/><rect x="244.5" y="13" width="1.5" height="1.5" fill="#ccc"/>
<rect x="384" y="0" width="15" height="16" fill="#5a1f36"/><circle cx="390.5" cy="8" r="3.8" fill="#c08a3e"/>
</svg>
<div class="ui" style="left:97px;top:2px;color:#e8e8e8;font-size:11px;font-weight:bold">1</div>
<div class="ui" style="left:263px;top:2px;color:#b4b4b4;font-size:11px;letter-spacing:-0.25px">[Basic] (working)</div>
<div class="ui" style="left:399px;top:2px;color:#f0f0f0;font-size:11px;letter-spacing:-0.1px">8 errors</div>
<div class="a" style="left:775px;top:1px;width:481px;height:15px;border-radius:7px;background:#484848"></div>
<div class="a" style="left:1425px;top:0;width:75px;height:8px;background:#303030;border-top:1px solid #2a2a2a"></div>
</div>
</body></html>
